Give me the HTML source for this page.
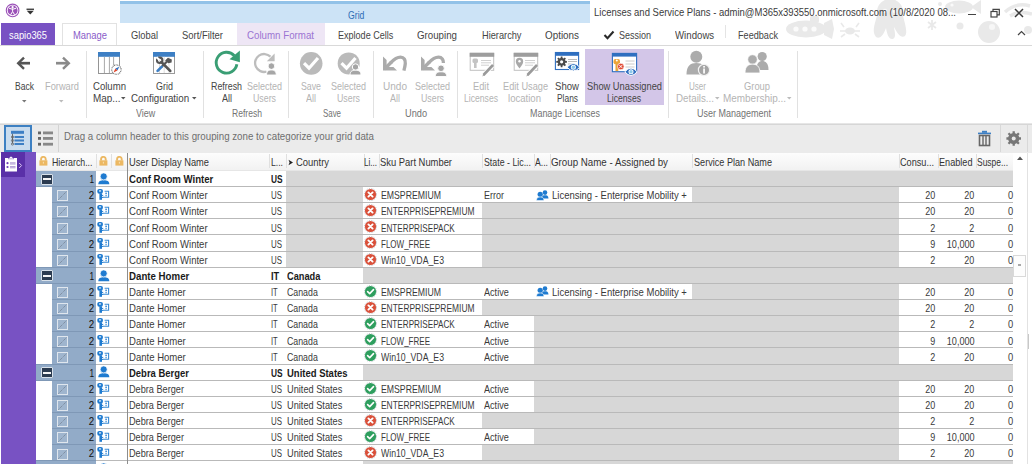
<!DOCTYPE html>
<html><head><meta charset="utf-8"><style>
html,body{margin:0;padding:0;width:1032px;height:464px;overflow:hidden;background:#fff;position:relative;font-family:"Liberation Sans", sans-serif;}
.a{position:absolute;box-sizing:border-box;}
.t{position:absolute;white-space:pre;line-height:16px;font-family:"Liberation Sans", sans-serif;}
</style></head><body>
<div class="a" style="left:120px;top:1px;width:470px;height:21.5px;background:#cce3f6;"></div><div class="a" style="left:120px;top:1px;width:470px;height:3px;background:#92c2e8;"></div><div class="a" style="left:1px;top:23px;width:54px;height:22px;background:#7852c3;"></div><div class="a" style="left:62px;top:22.5px;width:55px;height:23.5px;background:#ffffff;border:1px solid #e2e2e2;border-bottom:none;"></div><div class="a" style="left:236.5px;top:22.5px;width:88px;height:22.5px;background:#eee6f5;"></div><svg class="a" style="left:603px;top:30px;" width="12" height="10" viewBox="0 0 12 10"><path d="M1.5 5 L4.5 8.2 L10.5 1.5" fill="none" stroke="#2a2a2a" stroke-width="2.1"/></svg><div class="a" style="left:725.3px;top:25px;width:1px;height:13px;background:#e4e4e4;"></div><div class="a" style="left:0px;top:45px;width:1032px;height:1px;background:#d9d9d9;"></div><div class="a" style="left:55px;top:45px;width:7px;height:1px;background:#d9d9d9;"></div><div class="a" style="left:0px;top:46px;width:1032px;height:77px;background:#ffffff;"></div><div class="a" style="left:0px;top:123px;width:1032px;height:1px;background:#e6e6e6;"></div><div class="a" style="left:85.5px;top:51px;width:1px;height:67px;background:#e1e1e1;"></div><div class="a" style="left:203.4px;top:51px;width:1px;height:67px;background:#e1e1e1;"></div><div class="a" style="left:288.3px;top:51px;width:1px;height:67px;background:#e1e1e1;"></div><div class="a" style="left:372.6px;top:51px;width:1px;height:67px;background:#e1e1e1;"></div><div class="a" style="left:456.5px;top:51px;width:1px;height:67px;background:#e1e1e1;"></div><div class="a" style="left:668px;top:51px;width:1px;height:67px;background:#e1e1e1;"></div><div class="a" style="left:797px;top:51px;width:1px;height:67px;background:#e1e1e1;"></div><div class="a" style="left:585.3px;top:49.3px;width:79px;height:55.8px;background:#d3c6e8;"></div><div class="a" style="left:0px;top:124px;width:1032px;height:28.5px;background:#ebebeb;"></div><div class="a" style="left:0px;top:124px;width:1032px;height:1px;background:#d6d6d6;"></div><div class="a" style="left:4.3px;top:125px;width:27.4px;height:26.5px;background:#c9dcee;border:2px solid #3d80c2;"></div><div class="a" style="left:58px;top:125px;width:1px;height:27px;background:#d3d3d3;"></div><div class="a" style="left:1000px;top:125px;width:1px;height:27px;background:#d8d8d8;"></div><div class="a" style="left:1027px;top:125px;width:1px;height:27px;background:#d8d8d8;"></div><div class="a" style="left:1px;top:152px;width:35px;height:312px;background:#7852c3;"></div><div class="a" style="left:1px;top:152px;width:24px;height:25px;background:#5a30a8;"></div><div class="a" style="left:36px;top:152.5px;width:977px;height:18px;background:linear-gradient(#fdfdfd,#f1f1f1);"></div><div class="a" style="left:36px;top:170px;width:977px;height:0.6px;background:#e6e6e6;"></div><div class="a" style="left:95.6px;top:154px;width:1px;height:14px;background:#e0e0e0;"></div><div class="a" style="left:111px;top:154px;width:1px;height:14px;background:#e0e0e0;"></div><div class="a" style="left:269.4px;top:154px;width:1px;height:14px;background:#e0e0e0;"></div><div class="a" style="left:285.5px;top:154px;width:1px;height:14px;background:#e0e0e0;"></div><div class="a" style="left:363.6px;top:154px;width:1px;height:14px;background:#e0e0e0;"></div><div class="a" style="left:379.3px;top:154px;width:1px;height:14px;background:#e0e0e0;"></div><div class="a" style="left:482.3px;top:154px;width:1px;height:14px;background:#e0e0e0;"></div><div class="a" style="left:534.4px;top:154px;width:1px;height:14px;background:#e0e0e0;"></div><div class="a" style="left:550.3px;top:154px;width:1px;height:14px;background:#e0e0e0;"></div><div class="a" style="left:691.9px;top:154px;width:1px;height:14px;background:#e0e0e0;"></div><div class="a" style="left:898.5px;top:154px;width:1px;height:14px;background:#e0e0e0;"></div><div class="a" style="left:937.5px;top:154px;width:1px;height:14px;background:#e0e0e0;"></div><div class="a" style="left:975.6px;top:154px;width:1px;height:14px;background:#e0e0e0;"></div><div class="a" style="left:36px;top:170.9px;width:977px;height:16.14px;background:#ffffff;"></div><div class="a" style="left:36px;top:170.9px;width:60px;height:16.14px;background:#92abc8;"></div><div class="a" style="left:286px;top:170.9px;width:727px;height:16.14px;background:#d7d7d7;"></div><div class="a" style="left:96px;top:186.04000000000002px;width:917px;height:1px;background:#b9b9b9;"></div><div class="a" style="left:36px;top:186.04000000000002px;width:60px;height:1px;background:#7f98b6;"></div><div class="a" style="left:36px;top:187.04000000000002px;width:977px;height:16.14px;background:#ffffff;"></div><div class="a" style="left:52px;top:187.04000000000002px;width:44px;height:16.14px;background:#92abc8;"></div><div class="a" style="left:286px;top:187.04000000000002px;width:77px;height:16.14px;background:#d7d7d7;"></div><div class="a" style="left:691.9px;top:187.04000000000002px;width:207.1px;height:16.14px;background:#d7d7d7;"></div><div class="a" style="left:96px;top:202.18px;width:917px;height:1px;background:#b9b9b9;"></div><div class="a" style="left:52px;top:202.18px;width:44px;height:1px;background:#7f98b6;"></div><div class="a" style="left:36px;top:203.18px;width:977px;height:16.14px;background:#ffffff;"></div><div class="a" style="left:52px;top:203.18px;width:44px;height:16.14px;background:#92abc8;"></div><div class="a" style="left:286px;top:203.18px;width:77px;height:16.14px;background:#d7d7d7;"></div><div class="a" style="left:482.3px;top:203.18px;width:416.7px;height:16.14px;background:#d7d7d7;"></div><div class="a" style="left:96px;top:218.32px;width:917px;height:1px;background:#b9b9b9;"></div><div class="a" style="left:52px;top:218.32px;width:44px;height:1px;background:#7f98b6;"></div><div class="a" style="left:36px;top:219.32px;width:977px;height:16.14px;background:#ffffff;"></div><div class="a" style="left:52px;top:219.32px;width:44px;height:16.14px;background:#92abc8;"></div><div class="a" style="left:286px;top:219.32px;width:77px;height:16.14px;background:#d7d7d7;"></div><div class="a" style="left:482.3px;top:219.32px;width:416.7px;height:16.14px;background:#d7d7d7;"></div><div class="a" style="left:96px;top:234.45999999999998px;width:917px;height:1px;background:#b9b9b9;"></div><div class="a" style="left:52px;top:234.45999999999998px;width:44px;height:1px;background:#7f98b6;"></div><div class="a" style="left:36px;top:235.46px;width:977px;height:16.14px;background:#ffffff;"></div><div class="a" style="left:52px;top:235.46px;width:44px;height:16.14px;background:#92abc8;"></div><div class="a" style="left:286px;top:235.46px;width:77px;height:16.14px;background:#d7d7d7;"></div><div class="a" style="left:482.3px;top:235.46px;width:416.7px;height:16.14px;background:#d7d7d7;"></div><div class="a" style="left:96px;top:250.60000000000002px;width:917px;height:1px;background:#b9b9b9;"></div><div class="a" style="left:52px;top:250.60000000000002px;width:44px;height:1px;background:#7f98b6;"></div><div class="a" style="left:36px;top:251.60000000000002px;width:977px;height:16.14px;background:#ffffff;"></div><div class="a" style="left:52px;top:251.60000000000002px;width:44px;height:16.14px;background:#92abc8;"></div><div class="a" style="left:286px;top:251.60000000000002px;width:77px;height:16.14px;background:#d7d7d7;"></div><div class="a" style="left:482.3px;top:251.60000000000002px;width:416.7px;height:16.14px;background:#d7d7d7;"></div><div class="a" style="left:96px;top:266.74px;width:917px;height:1px;background:#b9b9b9;"></div><div class="a" style="left:36px;top:266.74px;width:60px;height:1px;background:#7f98b6;"></div><div class="a" style="left:36px;top:267.74px;width:977px;height:16.14px;background:#ffffff;"></div><div class="a" style="left:36px;top:267.74px;width:60px;height:16.14px;background:#92abc8;"></div><div class="a" style="left:363px;top:267.74px;width:650px;height:16.14px;background:#d7d7d7;"></div><div class="a" style="left:96px;top:282.88px;width:917px;height:1px;background:#b9b9b9;"></div><div class="a" style="left:36px;top:282.88px;width:60px;height:1px;background:#7f98b6;"></div><div class="a" style="left:36px;top:283.88px;width:977px;height:16.14px;background:#ffffff;"></div><div class="a" style="left:52px;top:283.88px;width:44px;height:16.14px;background:#92abc8;"></div><div class="a" style="left:691.9px;top:283.88px;width:207.1px;height:16.14px;background:#d7d7d7;"></div><div class="a" style="left:96px;top:299.02px;width:917px;height:1px;background:#b9b9b9;"></div><div class="a" style="left:52px;top:299.02px;width:44px;height:1px;background:#7f98b6;"></div><div class="a" style="left:36px;top:300.02px;width:977px;height:16.14px;background:#ffffff;"></div><div class="a" style="left:52px;top:300.02px;width:44px;height:16.14px;background:#92abc8;"></div><div class="a" style="left:482.3px;top:300.02px;width:416.7px;height:16.14px;background:#d7d7d7;"></div><div class="a" style="left:96px;top:315.15999999999997px;width:917px;height:1px;background:#b9b9b9;"></div><div class="a" style="left:52px;top:315.15999999999997px;width:44px;height:1px;background:#7f98b6;"></div><div class="a" style="left:36px;top:316.15999999999997px;width:977px;height:16.14px;background:#ffffff;"></div><div class="a" style="left:52px;top:316.15999999999997px;width:44px;height:16.14px;background:#92abc8;"></div><div class="a" style="left:534.4px;top:316.15999999999997px;width:364.6px;height:16.14px;background:#d7d7d7;"></div><div class="a" style="left:96px;top:331.29999999999995px;width:917px;height:1px;background:#b9b9b9;"></div><div class="a" style="left:52px;top:331.29999999999995px;width:44px;height:1px;background:#7f98b6;"></div><div class="a" style="left:36px;top:332.3px;width:977px;height:16.14px;background:#ffffff;"></div><div class="a" style="left:52px;top:332.3px;width:44px;height:16.14px;background:#92abc8;"></div><div class="a" style="left:534.4px;top:332.3px;width:364.6px;height:16.14px;background:#d7d7d7;"></div><div class="a" style="left:96px;top:347.44px;width:917px;height:1px;background:#b9b9b9;"></div><div class="a" style="left:52px;top:347.44px;width:44px;height:1px;background:#7f98b6;"></div><div class="a" style="left:36px;top:348.44000000000005px;width:977px;height:16.14px;background:#ffffff;"></div><div class="a" style="left:52px;top:348.44000000000005px;width:44px;height:16.14px;background:#92abc8;"></div><div class="a" style="left:534.4px;top:348.44000000000005px;width:364.6px;height:16.14px;background:#d7d7d7;"></div><div class="a" style="left:96px;top:363.58000000000004px;width:917px;height:1px;background:#b9b9b9;"></div><div class="a" style="left:36px;top:363.58000000000004px;width:60px;height:1px;background:#7f98b6;"></div><div class="a" style="left:36px;top:364.58000000000004px;width:977px;height:16.14px;background:#ffffff;"></div><div class="a" style="left:36px;top:364.58000000000004px;width:60px;height:16.14px;background:#92abc8;"></div><div class="a" style="left:363px;top:364.58000000000004px;width:650px;height:16.14px;background:#d7d7d7;"></div><div class="a" style="left:96px;top:379.72px;width:917px;height:1px;background:#b9b9b9;"></div><div class="a" style="left:36px;top:379.72px;width:60px;height:1px;background:#7f98b6;"></div><div class="a" style="left:36px;top:380.72px;width:977px;height:16.14px;background:#ffffff;"></div><div class="a" style="left:52px;top:380.72px;width:44px;height:16.14px;background:#92abc8;"></div><div class="a" style="left:534.4px;top:380.72px;width:364.6px;height:16.14px;background:#d7d7d7;"></div><div class="a" style="left:96px;top:395.86px;width:917px;height:1px;background:#b9b9b9;"></div><div class="a" style="left:52px;top:395.86px;width:44px;height:1px;background:#7f98b6;"></div><div class="a" style="left:36px;top:396.86px;width:977px;height:16.14px;background:#ffffff;"></div><div class="a" style="left:52px;top:396.86px;width:44px;height:16.14px;background:#92abc8;"></div><div class="a" style="left:534.4px;top:396.86px;width:364.6px;height:16.14px;background:#d7d7d7;"></div><div class="a" style="left:96px;top:412.0px;width:917px;height:1px;background:#b9b9b9;"></div><div class="a" style="left:52px;top:412.0px;width:44px;height:1px;background:#7f98b6;"></div><div class="a" style="left:36px;top:413.0px;width:977px;height:16.14px;background:#ffffff;"></div><div class="a" style="left:52px;top:413.0px;width:44px;height:16.14px;background:#92abc8;"></div><div class="a" style="left:482.3px;top:413.0px;width:416.7px;height:16.14px;background:#d7d7d7;"></div><div class="a" style="left:96px;top:428.14px;width:917px;height:1px;background:#b9b9b9;"></div><div class="a" style="left:52px;top:428.14px;width:44px;height:1px;background:#7f98b6;"></div><div class="a" style="left:36px;top:429.14px;width:977px;height:16.14px;background:#ffffff;"></div><div class="a" style="left:52px;top:429.14px;width:44px;height:16.14px;background:#92abc8;"></div><div class="a" style="left:534.4px;top:429.14px;width:364.6px;height:16.14px;background:#d7d7d7;"></div><div class="a" style="left:96px;top:444.28px;width:917px;height:1px;background:#b9b9b9;"></div><div class="a" style="left:52px;top:444.28px;width:44px;height:1px;background:#7f98b6;"></div><div class="a" style="left:36px;top:445.28px;width:977px;height:16.14px;background:#ffffff;"></div><div class="a" style="left:52px;top:445.28px;width:44px;height:16.14px;background:#92abc8;"></div><div class="a" style="left:482.3px;top:445.28px;width:416.7px;height:16.14px;background:#d7d7d7;"></div><div class="a" style="left:96px;top:460.41999999999996px;width:917px;height:1px;background:#b9b9b9;"></div><div class="a" style="left:36px;top:460.41999999999996px;width:60px;height:1px;background:#7f98b6;"></div><div class="a" style="left:36px;top:461.41999999999996px;width:977px;height:16.14px;background:#ffffff;"></div><div class="a" style="left:36px;top:461.41999999999996px;width:60px;height:16.14px;background:#92abc8;"></div><div class="a" style="left:363px;top:461.41999999999996px;width:650px;height:16.14px;background:#d7d7d7;"></div><div class="a" style="left:96px;top:476.55999999999995px;width:917px;height:1px;background:#b9b9b9;"></div><div class="a" style="left:36px;top:476.55999999999995px;width:60px;height:1px;background:#7f98b6;"></div><div class="a" style="left:126.6px;top:152.5px;width:1px;height:312px;background:#8d8d8d;"></div><div class="a" style="left:41px;top:173.6px;width:11.5px;height:11px;background:#2b3b50;border:1px solid #d8e1ea;border-radius:1px;"></div><div class="a" style="left:42.9px;top:178.3px;width:8px;height:2.1px;background:#f4f4f4;"></div><svg class="a" style="left:97.5px;top:171.8px;" width="12" height="13" viewBox="0 0 12 13"><path d="M0.3 12.2 C0.4 9.2 2.5 8.3 5.8 8.3 C9.1 8.3 11.2 9.2 11.3 12.2 Z" fill="#1f7bd0"/><circle cx="5.7" cy="4.4" r="3.5" fill="#1f7bd0" stroke="#fff" stroke-width="0.7"/></svg><div class="a" style="left:57px;top:190.34000000000003px;width:11px;height:11px;background:rgba(255,255,255,0.12);border:1px solid #dfe6ee;"></div><svg class="a" style="left:58px;top:191.34000000000003px;" width="9" height="9" viewBox="0 0 9 9"><path d="M0.5 8.5 L8.5 0.5" stroke="#6d7888" stroke-width="0.9" stroke-dasharray="1 1"/></svg><svg class="a" style="left:97px;top:188.24px;" width="13" height="13" viewBox="0 0 13 13"><rect x="0.3" y="0.9" width="5.6" height="4.8" rx="1.9" fill="#1f7bd0"/><rect x="2" y="2.4" width="2.1" height="1.1" fill="#fff"/><rect x="2.4" y="5.4" width="2.6" height="6.4" fill="#1f7bd0"/><rect x="5" y="6.9" width="1.2" height="1" fill="#1f7bd0"/><rect x="5" y="8.9" width="1.2" height="1" fill="#1f7bd0"/><path d="M7.6 3.3 H11.6 V9.3 H6" fill="none" stroke="#3a8ad4" stroke-width="1.1"/><rect x="8.3" y="4.6" width="1.6" height="1.4" fill="#3a8ad4"/><rect x="8.3" y="6.7" width="1.6" height="1.6" fill="#6aa6de"/></svg><svg class="a" style="left:364.3px;top:187.94000000000003px;" width="13" height="13" viewBox="0 0 13 13"><circle cx="6.5" cy="6.5" r="6.1" fill="none" stroke="#a4abb3" stroke-width="0.7" stroke-dasharray="1.1 1.3"/><circle cx="6.5" cy="6.5" r="5.6" fill="#d9503a"/><path d="M4.4 4.4 L8.6 8.6 M8.6 4.4 L4.4 8.6" stroke="#fff" stroke-width="1.9" stroke-linecap="round"/></svg><svg class="a" style="left:535.5px;top:189.54000000000002px;" width="13" height="11" viewBox="0 0 13 11"><circle cx="9" cy="2.6" r="2.3" fill="#1f7bd0"/><path d="M5.8 8.5 C6 5.8 7.3 5.3 9 5.3 C10.8 5.3 12.3 5.8 12.5 8.5 Z" fill="#1f7bd0"/><circle cx="4.2" cy="4.3" r="2.6" fill="#1f7bd0"/><path d="M0.4 10.6 C0.6 7.5 2.2 7 4.2 7 C6.3 7 7.8 7.5 8 10.6 Z" fill="#1f7bd0" stroke="#fff" stroke-width="0.6"/></svg><div class="a" style="left:57px;top:206.48000000000002px;width:11px;height:11px;background:rgba(255,255,255,0.12);border:1px solid #dfe6ee;"></div><svg class="a" style="left:58px;top:207.48000000000002px;" width="9" height="9" viewBox="0 0 9 9"><path d="M0.5 8.5 L8.5 0.5" stroke="#6d7888" stroke-width="0.9" stroke-dasharray="1 1"/></svg><svg class="a" style="left:97px;top:204.38px;" width="13" height="13" viewBox="0 0 13 13"><rect x="0.3" y="0.9" width="5.6" height="4.8" rx="1.9" fill="#1f7bd0"/><rect x="2" y="2.4" width="2.1" height="1.1" fill="#fff"/><rect x="2.4" y="5.4" width="2.6" height="6.4" fill="#1f7bd0"/><rect x="5" y="6.9" width="1.2" height="1" fill="#1f7bd0"/><rect x="5" y="8.9" width="1.2" height="1" fill="#1f7bd0"/><path d="M7.6 3.3 H11.6 V9.3 H6" fill="none" stroke="#3a8ad4" stroke-width="1.1"/><rect x="8.3" y="4.6" width="1.6" height="1.4" fill="#3a8ad4"/><rect x="8.3" y="6.7" width="1.6" height="1.6" fill="#6aa6de"/></svg><svg class="a" style="left:364.3px;top:204.08px;" width="13" height="13" viewBox="0 0 13 13"><circle cx="6.5" cy="6.5" r="6.1" fill="none" stroke="#a4abb3" stroke-width="0.7" stroke-dasharray="1.1 1.3"/><circle cx="6.5" cy="6.5" r="5.6" fill="#d9503a"/><path d="M4.4 4.4 L8.6 8.6 M8.6 4.4 L4.4 8.6" stroke="#fff" stroke-width="1.9" stroke-linecap="round"/></svg><div class="a" style="left:57px;top:222.62px;width:11px;height:11px;background:rgba(255,255,255,0.12);border:1px solid #dfe6ee;"></div><svg class="a" style="left:58px;top:223.62px;" width="9" height="9" viewBox="0 0 9 9"><path d="M0.5 8.5 L8.5 0.5" stroke="#6d7888" stroke-width="0.9" stroke-dasharray="1 1"/></svg><svg class="a" style="left:97px;top:220.51999999999998px;" width="13" height="13" viewBox="0 0 13 13"><rect x="0.3" y="0.9" width="5.6" height="4.8" rx="1.9" fill="#1f7bd0"/><rect x="2" y="2.4" width="2.1" height="1.1" fill="#fff"/><rect x="2.4" y="5.4" width="2.6" height="6.4" fill="#1f7bd0"/><rect x="5" y="6.9" width="1.2" height="1" fill="#1f7bd0"/><rect x="5" y="8.9" width="1.2" height="1" fill="#1f7bd0"/><path d="M7.6 3.3 H11.6 V9.3 H6" fill="none" stroke="#3a8ad4" stroke-width="1.1"/><rect x="8.3" y="4.6" width="1.6" height="1.4" fill="#3a8ad4"/><rect x="8.3" y="6.7" width="1.6" height="1.6" fill="#6aa6de"/></svg><svg class="a" style="left:364.3px;top:220.22px;" width="13" height="13" viewBox="0 0 13 13"><circle cx="6.5" cy="6.5" r="6.1" fill="none" stroke="#a4abb3" stroke-width="0.7" stroke-dasharray="1.1 1.3"/><circle cx="6.5" cy="6.5" r="5.6" fill="#d9503a"/><path d="M4.4 4.4 L8.6 8.6 M8.6 4.4 L4.4 8.6" stroke="#fff" stroke-width="1.9" stroke-linecap="round"/></svg><div class="a" style="left:57px;top:238.76000000000002px;width:11px;height:11px;background:rgba(255,255,255,0.12);border:1px solid #dfe6ee;"></div><svg class="a" style="left:58px;top:239.76000000000002px;" width="9" height="9" viewBox="0 0 9 9"><path d="M0.5 8.5 L8.5 0.5" stroke="#6d7888" stroke-width="0.9" stroke-dasharray="1 1"/></svg><svg class="a" style="left:97px;top:236.66px;" width="13" height="13" viewBox="0 0 13 13"><rect x="0.3" y="0.9" width="5.6" height="4.8" rx="1.9" fill="#1f7bd0"/><rect x="2" y="2.4" width="2.1" height="1.1" fill="#fff"/><rect x="2.4" y="5.4" width="2.6" height="6.4" fill="#1f7bd0"/><rect x="5" y="6.9" width="1.2" height="1" fill="#1f7bd0"/><rect x="5" y="8.9" width="1.2" height="1" fill="#1f7bd0"/><path d="M7.6 3.3 H11.6 V9.3 H6" fill="none" stroke="#3a8ad4" stroke-width="1.1"/><rect x="8.3" y="4.6" width="1.6" height="1.4" fill="#3a8ad4"/><rect x="8.3" y="6.7" width="1.6" height="1.6" fill="#6aa6de"/></svg><svg class="a" style="left:364.3px;top:236.36px;" width="13" height="13" viewBox="0 0 13 13"><circle cx="6.5" cy="6.5" r="6.1" fill="none" stroke="#a4abb3" stroke-width="0.7" stroke-dasharray="1.1 1.3"/><circle cx="6.5" cy="6.5" r="5.6" fill="#d9503a"/><path d="M4.4 4.4 L8.6 8.6 M8.6 4.4 L4.4 8.6" stroke="#fff" stroke-width="1.9" stroke-linecap="round"/></svg><div class="a" style="left:57px;top:254.90000000000003px;width:11px;height:11px;background:rgba(255,255,255,0.12);border:1px solid #dfe6ee;"></div><svg class="a" style="left:58px;top:255.90000000000003px;" width="9" height="9" viewBox="0 0 9 9"><path d="M0.5 8.5 L8.5 0.5" stroke="#6d7888" stroke-width="0.9" stroke-dasharray="1 1"/></svg><svg class="a" style="left:97px;top:252.8px;" width="13" height="13" viewBox="0 0 13 13"><rect x="0.3" y="0.9" width="5.6" height="4.8" rx="1.9" fill="#1f7bd0"/><rect x="2" y="2.4" width="2.1" height="1.1" fill="#fff"/><rect x="2.4" y="5.4" width="2.6" height="6.4" fill="#1f7bd0"/><rect x="5" y="6.9" width="1.2" height="1" fill="#1f7bd0"/><rect x="5" y="8.9" width="1.2" height="1" fill="#1f7bd0"/><path d="M7.6 3.3 H11.6 V9.3 H6" fill="none" stroke="#3a8ad4" stroke-width="1.1"/><rect x="8.3" y="4.6" width="1.6" height="1.4" fill="#3a8ad4"/><rect x="8.3" y="6.7" width="1.6" height="1.6" fill="#6aa6de"/></svg><svg class="a" style="left:364.3px;top:252.5px;" width="13" height="13" viewBox="0 0 13 13"><circle cx="6.5" cy="6.5" r="6.1" fill="none" stroke="#a4abb3" stroke-width="0.7" stroke-dasharray="1.1 1.3"/><circle cx="6.5" cy="6.5" r="5.6" fill="#d9503a"/><path d="M4.4 4.4 L8.6 8.6 M8.6 4.4 L4.4 8.6" stroke="#fff" stroke-width="1.9" stroke-linecap="round"/></svg><div class="a" style="left:41px;top:270.44px;width:11.5px;height:11px;background:#2b3b50;border:1px solid #d8e1ea;border-radius:1px;"></div><div class="a" style="left:42.9px;top:275.14px;width:8px;height:2.1px;background:#f4f4f4;"></div><svg class="a" style="left:97.5px;top:268.64px;" width="12" height="13" viewBox="0 0 12 13"><path d="M0.3 12.2 C0.4 9.2 2.5 8.3 5.8 8.3 C9.1 8.3 11.2 9.2 11.3 12.2 Z" fill="#1f7bd0"/><circle cx="5.7" cy="4.4" r="3.5" fill="#1f7bd0" stroke="#fff" stroke-width="0.7"/></svg><div class="a" style="left:57px;top:287.18px;width:11px;height:11px;background:rgba(255,255,255,0.12);border:1px solid #dfe6ee;"></div><svg class="a" style="left:58px;top:288.18px;" width="9" height="9" viewBox="0 0 9 9"><path d="M0.5 8.5 L8.5 0.5" stroke="#6d7888" stroke-width="0.9" stroke-dasharray="1 1"/></svg><svg class="a" style="left:97px;top:285.08px;" width="13" height="13" viewBox="0 0 13 13"><rect x="0.3" y="0.9" width="5.6" height="4.8" rx="1.9" fill="#1f7bd0"/><rect x="2" y="2.4" width="2.1" height="1.1" fill="#fff"/><rect x="2.4" y="5.4" width="2.6" height="6.4" fill="#1f7bd0"/><rect x="5" y="6.9" width="1.2" height="1" fill="#1f7bd0"/><rect x="5" y="8.9" width="1.2" height="1" fill="#1f7bd0"/><path d="M7.6 3.3 H11.6 V9.3 H6" fill="none" stroke="#3a8ad4" stroke-width="1.1"/><rect x="8.3" y="4.6" width="1.6" height="1.4" fill="#3a8ad4"/><rect x="8.3" y="6.7" width="1.6" height="1.6" fill="#6aa6de"/></svg><svg class="a" style="left:364.3px;top:284.78px;" width="13" height="13" viewBox="0 0 13 13"><circle cx="6.5" cy="6.5" r="6.1" fill="none" stroke="#a4abb3" stroke-width="0.7" stroke-dasharray="1.1 1.3"/><circle cx="6.5" cy="6.5" r="5.6" fill="#2e9e5e"/><path d="M3.6 6.6 L5.7 8.6 L9.5 4.6" fill="none" stroke="#fff" stroke-width="1.6" stroke-linecap="round" stroke-linejoin="round"/></svg><svg class="a" style="left:535.5px;top:286.38px;" width="13" height="11" viewBox="0 0 13 11"><circle cx="9" cy="2.6" r="2.3" fill="#1f7bd0"/><path d="M5.8 8.5 C6 5.8 7.3 5.3 9 5.3 C10.8 5.3 12.3 5.8 12.5 8.5 Z" fill="#1f7bd0"/><circle cx="4.2" cy="4.3" r="2.6" fill="#1f7bd0"/><path d="M0.4 10.6 C0.6 7.5 2.2 7 4.2 7 C6.3 7 7.8 7.5 8 10.6 Z" fill="#1f7bd0" stroke="#fff" stroke-width="0.6"/></svg><div class="a" style="left:57px;top:303.32px;width:11px;height:11px;background:rgba(255,255,255,0.12);border:1px solid #dfe6ee;"></div><svg class="a" style="left:58px;top:304.32px;" width="9" height="9" viewBox="0 0 9 9"><path d="M0.5 8.5 L8.5 0.5" stroke="#6d7888" stroke-width="0.9" stroke-dasharray="1 1"/></svg><svg class="a" style="left:97px;top:301.21999999999997px;" width="13" height="13" viewBox="0 0 13 13"><rect x="0.3" y="0.9" width="5.6" height="4.8" rx="1.9" fill="#1f7bd0"/><rect x="2" y="2.4" width="2.1" height="1.1" fill="#fff"/><rect x="2.4" y="5.4" width="2.6" height="6.4" fill="#1f7bd0"/><rect x="5" y="6.9" width="1.2" height="1" fill="#1f7bd0"/><rect x="5" y="8.9" width="1.2" height="1" fill="#1f7bd0"/><path d="M7.6 3.3 H11.6 V9.3 H6" fill="none" stroke="#3a8ad4" stroke-width="1.1"/><rect x="8.3" y="4.6" width="1.6" height="1.4" fill="#3a8ad4"/><rect x="8.3" y="6.7" width="1.6" height="1.6" fill="#6aa6de"/></svg><svg class="a" style="left:364.3px;top:300.91999999999996px;" width="13" height="13" viewBox="0 0 13 13"><circle cx="6.5" cy="6.5" r="6.1" fill="none" stroke="#a4abb3" stroke-width="0.7" stroke-dasharray="1.1 1.3"/><circle cx="6.5" cy="6.5" r="5.6" fill="#d9503a"/><path d="M4.4 4.4 L8.6 8.6 M8.6 4.4 L4.4 8.6" stroke="#fff" stroke-width="1.9" stroke-linecap="round"/></svg><div class="a" style="left:57px;top:319.46px;width:11px;height:11px;background:rgba(255,255,255,0.12);border:1px solid #dfe6ee;"></div><svg class="a" style="left:58px;top:320.46px;" width="9" height="9" viewBox="0 0 9 9"><path d="M0.5 8.5 L8.5 0.5" stroke="#6d7888" stroke-width="0.9" stroke-dasharray="1 1"/></svg><svg class="a" style="left:97px;top:317.35999999999996px;" width="13" height="13" viewBox="0 0 13 13"><rect x="0.3" y="0.9" width="5.6" height="4.8" rx="1.9" fill="#1f7bd0"/><rect x="2" y="2.4" width="2.1" height="1.1" fill="#fff"/><rect x="2.4" y="5.4" width="2.6" height="6.4" fill="#1f7bd0"/><rect x="5" y="6.9" width="1.2" height="1" fill="#1f7bd0"/><rect x="5" y="8.9" width="1.2" height="1" fill="#1f7bd0"/><path d="M7.6 3.3 H11.6 V9.3 H6" fill="none" stroke="#3a8ad4" stroke-width="1.1"/><rect x="8.3" y="4.6" width="1.6" height="1.4" fill="#3a8ad4"/><rect x="8.3" y="6.7" width="1.6" height="1.6" fill="#6aa6de"/></svg><svg class="a" style="left:364.3px;top:317.05999999999995px;" width="13" height="13" viewBox="0 0 13 13"><circle cx="6.5" cy="6.5" r="6.1" fill="none" stroke="#a4abb3" stroke-width="0.7" stroke-dasharray="1.1 1.3"/><circle cx="6.5" cy="6.5" r="5.6" fill="#2e9e5e"/><path d="M3.6 6.6 L5.7 8.6 L9.5 4.6" fill="none" stroke="#fff" stroke-width="1.6" stroke-linecap="round" stroke-linejoin="round"/></svg><div class="a" style="left:57px;top:335.6px;width:11px;height:11px;background:rgba(255,255,255,0.12);border:1px solid #dfe6ee;"></div><svg class="a" style="left:58px;top:336.6px;" width="9" height="9" viewBox="0 0 9 9"><path d="M0.5 8.5 L8.5 0.5" stroke="#6d7888" stroke-width="0.9" stroke-dasharray="1 1"/></svg><svg class="a" style="left:97px;top:333.5px;" width="13" height="13" viewBox="0 0 13 13"><rect x="0.3" y="0.9" width="5.6" height="4.8" rx="1.9" fill="#1f7bd0"/><rect x="2" y="2.4" width="2.1" height="1.1" fill="#fff"/><rect x="2.4" y="5.4" width="2.6" height="6.4" fill="#1f7bd0"/><rect x="5" y="6.9" width="1.2" height="1" fill="#1f7bd0"/><rect x="5" y="8.9" width="1.2" height="1" fill="#1f7bd0"/><path d="M7.6 3.3 H11.6 V9.3 H6" fill="none" stroke="#3a8ad4" stroke-width="1.1"/><rect x="8.3" y="4.6" width="1.6" height="1.4" fill="#3a8ad4"/><rect x="8.3" y="6.7" width="1.6" height="1.6" fill="#6aa6de"/></svg><svg class="a" style="left:364.3px;top:333.2px;" width="13" height="13" viewBox="0 0 13 13"><circle cx="6.5" cy="6.5" r="6.1" fill="none" stroke="#a4abb3" stroke-width="0.7" stroke-dasharray="1.1 1.3"/><circle cx="6.5" cy="6.5" r="5.6" fill="#2e9e5e"/><path d="M3.6 6.6 L5.7 8.6 L9.5 4.6" fill="none" stroke="#fff" stroke-width="1.6" stroke-linecap="round" stroke-linejoin="round"/></svg><div class="a" style="left:57px;top:351.74000000000007px;width:11px;height:11px;background:rgba(255,255,255,0.12);border:1px solid #dfe6ee;"></div><svg class="a" style="left:58px;top:352.74000000000007px;" width="9" height="9" viewBox="0 0 9 9"><path d="M0.5 8.5 L8.5 0.5" stroke="#6d7888" stroke-width="0.9" stroke-dasharray="1 1"/></svg><svg class="a" style="left:97px;top:349.64000000000004px;" width="13" height="13" viewBox="0 0 13 13"><rect x="0.3" y="0.9" width="5.6" height="4.8" rx="1.9" fill="#1f7bd0"/><rect x="2" y="2.4" width="2.1" height="1.1" fill="#fff"/><rect x="2.4" y="5.4" width="2.6" height="6.4" fill="#1f7bd0"/><rect x="5" y="6.9" width="1.2" height="1" fill="#1f7bd0"/><rect x="5" y="8.9" width="1.2" height="1" fill="#1f7bd0"/><path d="M7.6 3.3 H11.6 V9.3 H6" fill="none" stroke="#3a8ad4" stroke-width="1.1"/><rect x="8.3" y="4.6" width="1.6" height="1.4" fill="#3a8ad4"/><rect x="8.3" y="6.7" width="1.6" height="1.6" fill="#6aa6de"/></svg><svg class="a" style="left:364.3px;top:349.34000000000003px;" width="13" height="13" viewBox="0 0 13 13"><circle cx="6.5" cy="6.5" r="6.1" fill="none" stroke="#a4abb3" stroke-width="0.7" stroke-dasharray="1.1 1.3"/><circle cx="6.5" cy="6.5" r="5.6" fill="#2e9e5e"/><path d="M3.6 6.6 L5.7 8.6 L9.5 4.6" fill="none" stroke="#fff" stroke-width="1.6" stroke-linecap="round" stroke-linejoin="round"/></svg><div class="a" style="left:41px;top:367.28000000000003px;width:11.5px;height:11px;background:#2b3b50;border:1px solid #d8e1ea;border-radius:1px;"></div><div class="a" style="left:42.9px;top:371.98px;width:8px;height:2.1px;background:#f4f4f4;"></div><svg class="a" style="left:97.5px;top:365.48px;" width="12" height="13" viewBox="0 0 12 13"><path d="M0.3 12.2 C0.4 9.2 2.5 8.3 5.8 8.3 C9.1 8.3 11.2 9.2 11.3 12.2 Z" fill="#1f7bd0"/><circle cx="5.7" cy="4.4" r="3.5" fill="#1f7bd0" stroke="#fff" stroke-width="0.7"/></svg><div class="a" style="left:57px;top:384.02000000000004px;width:11px;height:11px;background:rgba(255,255,255,0.12);border:1px solid #dfe6ee;"></div><svg class="a" style="left:58px;top:385.02000000000004px;" width="9" height="9" viewBox="0 0 9 9"><path d="M0.5 8.5 L8.5 0.5" stroke="#6d7888" stroke-width="0.9" stroke-dasharray="1 1"/></svg><svg class="a" style="left:97px;top:381.92px;" width="13" height="13" viewBox="0 0 13 13"><rect x="0.3" y="0.9" width="5.6" height="4.8" rx="1.9" fill="#1f7bd0"/><rect x="2" y="2.4" width="2.1" height="1.1" fill="#fff"/><rect x="2.4" y="5.4" width="2.6" height="6.4" fill="#1f7bd0"/><rect x="5" y="6.9" width="1.2" height="1" fill="#1f7bd0"/><rect x="5" y="8.9" width="1.2" height="1" fill="#1f7bd0"/><path d="M7.6 3.3 H11.6 V9.3 H6" fill="none" stroke="#3a8ad4" stroke-width="1.1"/><rect x="8.3" y="4.6" width="1.6" height="1.4" fill="#3a8ad4"/><rect x="8.3" y="6.7" width="1.6" height="1.6" fill="#6aa6de"/></svg><svg class="a" style="left:364.3px;top:381.62px;" width="13" height="13" viewBox="0 0 13 13"><circle cx="6.5" cy="6.5" r="6.1" fill="none" stroke="#a4abb3" stroke-width="0.7" stroke-dasharray="1.1 1.3"/><circle cx="6.5" cy="6.5" r="5.6" fill="#2e9e5e"/><path d="M3.6 6.6 L5.7 8.6 L9.5 4.6" fill="none" stroke="#fff" stroke-width="1.6" stroke-linecap="round" stroke-linejoin="round"/></svg><div class="a" style="left:57px;top:400.16px;width:11px;height:11px;background:rgba(255,255,255,0.12);border:1px solid #dfe6ee;"></div><svg class="a" style="left:58px;top:401.16px;" width="9" height="9" viewBox="0 0 9 9"><path d="M0.5 8.5 L8.5 0.5" stroke="#6d7888" stroke-width="0.9" stroke-dasharray="1 1"/></svg><svg class="a" style="left:97px;top:398.06px;" width="13" height="13" viewBox="0 0 13 13"><rect x="0.3" y="0.9" width="5.6" height="4.8" rx="1.9" fill="#1f7bd0"/><rect x="2" y="2.4" width="2.1" height="1.1" fill="#fff"/><rect x="2.4" y="5.4" width="2.6" height="6.4" fill="#1f7bd0"/><rect x="5" y="6.9" width="1.2" height="1" fill="#1f7bd0"/><rect x="5" y="8.9" width="1.2" height="1" fill="#1f7bd0"/><path d="M7.6 3.3 H11.6 V9.3 H6" fill="none" stroke="#3a8ad4" stroke-width="1.1"/><rect x="8.3" y="4.6" width="1.6" height="1.4" fill="#3a8ad4"/><rect x="8.3" y="6.7" width="1.6" height="1.6" fill="#6aa6de"/></svg><svg class="a" style="left:364.3px;top:397.76px;" width="13" height="13" viewBox="0 0 13 13"><circle cx="6.5" cy="6.5" r="6.1" fill="none" stroke="#a4abb3" stroke-width="0.7" stroke-dasharray="1.1 1.3"/><circle cx="6.5" cy="6.5" r="5.6" fill="#2e9e5e"/><path d="M3.6 6.6 L5.7 8.6 L9.5 4.6" fill="none" stroke="#fff" stroke-width="1.6" stroke-linecap="round" stroke-linejoin="round"/></svg><div class="a" style="left:57px;top:416.3px;width:11px;height:11px;background:rgba(255,255,255,0.12);border:1px solid #dfe6ee;"></div><svg class="a" style="left:58px;top:417.3px;" width="9" height="9" viewBox="0 0 9 9"><path d="M0.5 8.5 L8.5 0.5" stroke="#6d7888" stroke-width="0.9" stroke-dasharray="1 1"/></svg><svg class="a" style="left:97px;top:414.2px;" width="13" height="13" viewBox="0 0 13 13"><rect x="0.3" y="0.9" width="5.6" height="4.8" rx="1.9" fill="#1f7bd0"/><rect x="2" y="2.4" width="2.1" height="1.1" fill="#fff"/><rect x="2.4" y="5.4" width="2.6" height="6.4" fill="#1f7bd0"/><rect x="5" y="6.9" width="1.2" height="1" fill="#1f7bd0"/><rect x="5" y="8.9" width="1.2" height="1" fill="#1f7bd0"/><path d="M7.6 3.3 H11.6 V9.3 H6" fill="none" stroke="#3a8ad4" stroke-width="1.1"/><rect x="8.3" y="4.6" width="1.6" height="1.4" fill="#3a8ad4"/><rect x="8.3" y="6.7" width="1.6" height="1.6" fill="#6aa6de"/></svg><svg class="a" style="left:364.3px;top:413.9px;" width="13" height="13" viewBox="0 0 13 13"><circle cx="6.5" cy="6.5" r="6.1" fill="none" stroke="#a4abb3" stroke-width="0.7" stroke-dasharray="1.1 1.3"/><circle cx="6.5" cy="6.5" r="5.6" fill="#d9503a"/><path d="M4.4 4.4 L8.6 8.6 M8.6 4.4 L4.4 8.6" stroke="#fff" stroke-width="1.9" stroke-linecap="round"/></svg><div class="a" style="left:57px;top:432.44px;width:11px;height:11px;background:rgba(255,255,255,0.12);border:1px solid #dfe6ee;"></div><svg class="a" style="left:58px;top:433.44px;" width="9" height="9" viewBox="0 0 9 9"><path d="M0.5 8.5 L8.5 0.5" stroke="#6d7888" stroke-width="0.9" stroke-dasharray="1 1"/></svg><svg class="a" style="left:97px;top:430.34px;" width="13" height="13" viewBox="0 0 13 13"><rect x="0.3" y="0.9" width="5.6" height="4.8" rx="1.9" fill="#1f7bd0"/><rect x="2" y="2.4" width="2.1" height="1.1" fill="#fff"/><rect x="2.4" y="5.4" width="2.6" height="6.4" fill="#1f7bd0"/><rect x="5" y="6.9" width="1.2" height="1" fill="#1f7bd0"/><rect x="5" y="8.9" width="1.2" height="1" fill="#1f7bd0"/><path d="M7.6 3.3 H11.6 V9.3 H6" fill="none" stroke="#3a8ad4" stroke-width="1.1"/><rect x="8.3" y="4.6" width="1.6" height="1.4" fill="#3a8ad4"/><rect x="8.3" y="6.7" width="1.6" height="1.6" fill="#6aa6de"/></svg><svg class="a" style="left:364.3px;top:430.03999999999996px;" width="13" height="13" viewBox="0 0 13 13"><circle cx="6.5" cy="6.5" r="6.1" fill="none" stroke="#a4abb3" stroke-width="0.7" stroke-dasharray="1.1 1.3"/><circle cx="6.5" cy="6.5" r="5.6" fill="#2e9e5e"/><path d="M3.6 6.6 L5.7 8.6 L9.5 4.6" fill="none" stroke="#fff" stroke-width="1.6" stroke-linecap="round" stroke-linejoin="round"/></svg><div class="a" style="left:57px;top:448.58px;width:11px;height:11px;background:rgba(255,255,255,0.12);border:1px solid #dfe6ee;"></div><svg class="a" style="left:58px;top:449.58px;" width="9" height="9" viewBox="0 0 9 9"><path d="M0.5 8.5 L8.5 0.5" stroke="#6d7888" stroke-width="0.9" stroke-dasharray="1 1"/></svg><svg class="a" style="left:97px;top:446.47999999999996px;" width="13" height="13" viewBox="0 0 13 13"><rect x="0.3" y="0.9" width="5.6" height="4.8" rx="1.9" fill="#1f7bd0"/><rect x="2" y="2.4" width="2.1" height="1.1" fill="#fff"/><rect x="2.4" y="5.4" width="2.6" height="6.4" fill="#1f7bd0"/><rect x="5" y="6.9" width="1.2" height="1" fill="#1f7bd0"/><rect x="5" y="8.9" width="1.2" height="1" fill="#1f7bd0"/><path d="M7.6 3.3 H11.6 V9.3 H6" fill="none" stroke="#3a8ad4" stroke-width="1.1"/><rect x="8.3" y="4.6" width="1.6" height="1.4" fill="#3a8ad4"/><rect x="8.3" y="6.7" width="1.6" height="1.6" fill="#6aa6de"/></svg><svg class="a" style="left:364.3px;top:446.17999999999995px;" width="13" height="13" viewBox="0 0 13 13"><circle cx="6.5" cy="6.5" r="6.1" fill="none" stroke="#a4abb3" stroke-width="0.7" stroke-dasharray="1.1 1.3"/><circle cx="6.5" cy="6.5" r="5.6" fill="#d9503a"/><path d="M4.4 4.4 L8.6 8.6 M8.6 4.4 L4.4 8.6" stroke="#fff" stroke-width="1.9" stroke-linecap="round"/></svg><div class="a" style="left:41px;top:464.11999999999995px;width:11.5px;height:11px;background:#2b3b50;border:1px solid #d8e1ea;border-radius:1px;"></div><div class="a" style="left:42.9px;top:468.81999999999994px;width:8px;height:2.1px;background:#f4f4f4;"></div><svg class="a" style="left:97.5px;top:462.31999999999994px;" width="12" height="13" viewBox="0 0 12 13"><path d="M0.3 12.2 C0.4 9.2 2.5 8.3 5.8 8.3 C9.1 8.3 11.2 9.2 11.3 12.2 Z" fill="#1f7bd0"/><circle cx="5.7" cy="4.4" r="3.5" fill="#1f7bd0" stroke="#fff" stroke-width="0.7"/></svg><div class="a" style="left:1013px;top:152.5px;width:19px;height:312px;background:#ffffff;"></div><div class="a" style="left:1027px;top:152.5px;width:1px;height:312px;background:#e2e2e2;"></div><div class="a" style="left:1013px;top:254.7px;width:12.6px;height:22px;background:#fdfdfd;border:1px solid #d9d9d9;"></div><div class="a" style="left:1018px;top:264.3px;width:3px;height:2.2px;background:#a8a8a8;"></div><svg class="a" style="left:1016px;top:155px;" width="8" height="6" viewBox="0 0 8 6"><path d="M1 5 L4 1.5 L7 5 Z" fill="#555"/></svg><div class="a" style="left:1027.5px;top:334px;width:1.2px;height:15px;background:#c8c8c8;"></div><svg class="a" style="left:5px;top:3px;" width="16" height="16" viewBox="0 0 16 16"><circle cx="7.6" cy="7.4" r="6.3" fill="none" stroke="#9c52b9" stroke-width="1.1"/><circle cx="7.6" cy="7.4" r="4.9" fill="#9c52b9"/><circle cx="7.6" cy="4.2" r="1.1" fill="#fff"/><path d="M7.6 5.3 L7.6 8.5 M4 5.2 L7.6 6.3 L11.2 5.2 M7.6 8.5 L5.6 11.8 M7.6 8.5 L9.6 11.8" stroke="#fff" stroke-width="1" fill="none"/></svg><svg class="a" style="left:26px;top:8px;" width="9" height="7" viewBox="0 0 9 7"><rect x="0.5" y="0.6" width="7.5" height="1.3" fill="#333"/><path d="M0.8 2.8 L7.8 2.8 L4.3 6.4 Z" fill="#333"/></svg><svg class="a" style="left:760px;top:0px;" width="272" height="46" viewBox="0 0 272 46">
<ellipse cx="46" cy="29" rx="20" ry="8.5" fill="#e9e9e9"/><rect x="50" y="16" width="9" height="7" rx="2" fill="#e9e9e9"/><path d="M64 23 L72 19 L74 29 L72 39 L64 35 Z" fill="#e9e9e9"/>
<circle cx="36" cy="29" r="2.6" fill="#fbfbfb"/><circle cx="45" cy="29" r="2.6" fill="#fbfbfb"/><circle cx="54" cy="29" r="2.6" fill="#fbfbfb"/>
<ellipse cx="90" cy="31" rx="5" ry="3.5" fill="#e9e9e9"/><path d="M84 27 L81 23 M96 27 L99 23 M85 34 L81 37 M95 34 L99 37 M86 31 L80 31 M94 31 L100 31" stroke="#e9e9e9" stroke-width="1.6"/>
<circle cx="130" cy="12" r="13" fill="#e9e9e9"/><path d="M117 16 C114 26 112 32 116 37 C120 40 124 34 126 28 C127 34 129 40 133 39 C137 37 134 30 134 27 C137 33 141 39 145 36 C148 33 145 24 143 16 Z" fill="#e9e9e9"/>
<circle cx="125" cy="11" r="2.2" fill="#fafafa"/><circle cx="135" cy="11" r="2.2" fill="#fafafa"/>
<path d="M168 22 L176 28 M176 22 L168 28 M172 20 L172 30" stroke="#e9e9e9" stroke-width="1.8"/>
<ellipse cx="199" cy="7" rx="14" ry="6.5" fill="#e9e9e9"/><path d="M211 7 L221 0 L221 14 Z" fill="#e9e9e9"/><circle cx="192" cy="5" r="1.6" fill="#fafafa"/>
<circle cx="200" cy="26" r="3.5" fill="#e9e9e9"/><circle cx="180" cy="4" r="2" fill="#e9e9e9"/>
<circle cx="229" cy="32" r="11" fill="#e9e9e9"/><circle cx="232" cy="27" r="3" fill="#f7f7f7"/>
<path d="M245 12 Q256 2 270 6 M250 16 Q260 10 272 14" stroke="#e9e9e9" stroke-width="3.5" fill="none"/><circle cx="268" cy="30" r="4" fill="#e9e9e9"/>
</svg><div class="a" style="left:968px;top:13.5px;width:8px;height:1.3px;background:#444;"></div><svg class="a" style="left:990px;top:8px;" width="12" height="11" viewBox="0 0 12 11"><rect x="1" y="3.5" width="6" height="5.5" fill="none" stroke="#444" stroke-width="1.2"/><path d="M3 3.5 V1.3 H9.3 V6.8 H7" fill="none" stroke="#444" stroke-width="1.2"/></svg><svg class="a" style="left:1013px;top:7px;" width="12" height="11" viewBox="0 0 12 11"><path d="M2 2 L10 10 M10 2 L2 10" stroke="#3a3a3a" stroke-width="1.5"/></svg><svg class="a" style="left:1017px;top:30px;" width="9" height="6" viewBox="0 0 9 6"><path d="M1 5 L4.5 1.5 L8 5" fill="none" stroke="#444" stroke-width="1.2"/></svg><svg class="a" style="left:15px;top:55px;" width="18" height="16" viewBox="0 0 18 16"><path d="M15 8.2 H4" stroke="#555" stroke-width="2.7"/><path d="M9 2.6 L3.2 8.2 L9 13.8" fill="none" stroke="#555" stroke-width="2.4"/></svg><svg class="a" style="left:54px;top:55px;" width="18" height="16" viewBox="0 0 18 16"><path d="M2 8.2 H14" stroke="#8a8a8a" stroke-width="2.7"/><path d="M9 2.6 L14.8 8.2 L9 13.8" fill="none" stroke="#8a8a8a" stroke-width="2.4"/></svg><svg class="a" style="left:97px;top:51px;" width="28" height="28" viewBox="0 0 28 28"><rect x="1.5" y="1.5" width="21" height="21" fill="#fff" stroke="#959595" stroke-width="1"/><rect x="1" y="1" width="22" height="4.8" fill="#3d7fc4"/><path d="M7.4 5.8 V22 M12.4 5.8 V22 M16.6 5.8 V15" stroke="#a8a8a8" stroke-width="1"/><circle cx="19.4" cy="18.6" r="5.3" fill="#fff"/><circle cx="19.4" cy="18.6" r="4.7" fill="#fff" stroke="#6a6a6a" stroke-width="1.1" stroke-dasharray="0.9 0.7"/><path d="M22.3 15.7 L20.4 19.6 L18.4 17.6 Z" fill="#2f6fc0"/><path d="M16.5 21.5 L20.4 19.6 L18.4 17.6 Z" fill="#e0452a"/></svg><svg class="a" style="left:152px;top:51px;" width="26" height="26" viewBox="0 0 26 26"><rect x="1.5" y="1.5" width="21" height="21" fill="#fff" stroke="#9a9a9a" stroke-width="1"/><rect x="1" y="1" width="22" height="4.8" fill="#3d7fc4"/><path d="M7.5 5.8 V22 M12.2 5.8 V22 M17 5.8 V22" stroke="#dedede" stroke-width="1"/><path d="M15 10.5 L9.5 16" stroke="#555" stroke-width="2.2"/><path d="M9.6 15.9 L5.6 19.9" stroke="#3d7fc4" stroke-width="2.7" stroke-linecap="round"/><path d="M13.1 9.6 L15.9 6.8 L19.8 8.4 L19.6 11.6 L16.4 12.3 Z" fill="#555"/><path d="M9.3 11 L18.3 20" stroke="#555" stroke-width="2.5" stroke-linecap="round"/><circle cx="7.7" cy="9.3" r="2.7" fill="none" stroke="#555" stroke-width="2.1"/><path d="M7.4 9 L4.6 6.2" stroke="#fff" stroke-width="2"/></svg><svg class="a" style="left:210px;top:48px;" width="34" height="30" viewBox="0 0 34 30"><path d="M24.33 7.74 A10.4 10.4 0 1 0 26.87 16.33" fill="none" stroke="#3a9e74" stroke-width="2.9"/><path d="M19.5 11.2 L29.9 2.4 L29.9 14.2 Z" fill="#3a9e74"/></svg><svg class="a" style="left:250px;top:48px;" width="30" height="30" viewBox="0 0 30 30"><path d="M20.46 8.64 A9 9 0 1 0 16.43 23.69" fill="none" stroke="#bdbdbd" stroke-width="2.3"/><path d="M16.8 13.2 L24.6 5.6 L24.6 13.2 Z" fill="#bdbdbd"/><circle cx="21.4" cy="18.1" r="3.3" fill="#a6a6a6" stroke="#fff" stroke-width="0.9"/><path d="M16.5 27 C16.7 23.3 18.3 22 21.4 22 C24.5 22 26.1 23.3 26.3 27 Z" fill="#a6a6a6" stroke="#fff" stroke-width="0.9"/></svg><svg class="a" style="left:298px;top:50px;" width="28" height="28" viewBox="0 0 28 28"><circle cx="13.2" cy="13.4" r="11.3" fill="#bababa"/><path d="M6 13.2 L11 18.2 L20 8" fill="none" stroke="#fff" stroke-width="3.2"/></svg><svg class="a" style="left:336px;top:50px;" width="28" height="28" viewBox="0 0 28 28"><circle cx="12.7" cy="13.4" r="11" fill="#bababa"/><path d="M5.5 13.2 L10.5 18.2 L19.5 8" fill="none" stroke="#fff" stroke-width="3.2"/><circle cx="19.5" cy="17" r="3.2" fill="#a5a5a5" stroke="#fff" stroke-width="1"/><path d="M14 25 C14.2 21 16.3 20.3 19.5 20.3 C22.7 20.3 24.8 21 25 25 Z" fill="#a5a5a5" stroke="#fff" stroke-width="1"/></svg><svg class="a" style="left:381px;top:51px;" width="28" height="24" viewBox="0 0 28 24"><path d="M2 5.5 L5.6 9.1 L5.6 15.9 L12.4 15.9 L16 19.5 L2 19.5 Z" fill="#ababab"/><path d="M3.5 18 L10.5 11" stroke="#ababab" stroke-width="3.3"/><path d="M9.6 11.9 C13 8.3 16.3 6.2 19.5 6.2 C23 6.2 24.6 9 24.3 12.5 C24.1 15 23.6 17 22.9 19.6" fill="none" stroke="#ababab" stroke-width="3.3"/></svg><svg class="a" style="left:419px;top:51px;" width="30" height="26" viewBox="0 0 30 26"><path d="M2 5.5 L5.6 9.1 L5.6 15.9 L12.4 15.9 L16 19.5 L2 19.5 Z" fill="#ababab"/><path d="M3.5 18 L10.5 11" stroke="#ababab" stroke-width="3.3"/><path d="M9.6 11.9 C13 8.3 16.3 6.2 19.5 6.2 C23 6.2 24.6 9 24.4 12" fill="none" stroke="#ababab" stroke-width="3.3"/><circle cx="22" cy="17.3" r="3.3" fill="#a5a5a5" stroke="#fff" stroke-width="0.9"/><path d="M16.3 25.5 C16.5 21.5 18.7 20.8 22 20.8 C25.3 20.8 27.5 21.5 27.7 25.5 Z" fill="#a5a5a5" stroke="#fff" stroke-width="0.9"/></svg><svg class="a" style="left:468px;top:51px;" width="30" height="28" viewBox="0 0 30 28"><rect x="2.2" y="2.3" width="23.5" height="17" fill="#fff" stroke="#c0c0c0" stroke-width="1"/><rect x="1.7" y="1.8" width="24.5" height="4" fill="#9d9d9d"/><rect x="4.5" y="7.5" width="5.5" height="4.5" rx="1.5" fill="#c4c4c4"/><rect x="6" y="11" width="2.6" height="6" fill="#c4c4c4"/><path d="M13 9.5 H23 M13 11.8 H23 M13 14.2 H21" stroke="#d0d0d0" stroke-width="1"/><path d="M15 24.5 L24.5 14.5" stroke="#fff" stroke-width="4.5"/><path d="M15.5 24 L25 14" stroke="#9a9a9a" stroke-width="2.6"/><path d="M14.3 25.5 L15.5 22.8 L16.8 24 Z" fill="#9a9a9a"/></svg><svg class="a" style="left:512px;top:51px;" width="30" height="28" viewBox="0 0 30 28"><rect x="2.2" y="2.3" width="23.5" height="17" fill="#fff" stroke="#c0c0c0" stroke-width="1"/><rect x="1.7" y="1.8" width="24.5" height="4" fill="#9d9d9d"/><path d="M7.5 17.5 C5 14 3.8 12.5 3.8 10.5 A3.7 3.7 0 0 1 11.2 10.5 C11.2 12.5 10 14 7.5 17.5 Z" fill="#a8a8a8"/><circle cx="7.5" cy="10.3" r="1.2" fill="#fff"/><path d="M13 9.5 H23 M13 11.8 H23 M13 14.2 H21" stroke="#d0d0d0" stroke-width="1"/><path d="M15 24.5 L24.5 14.5" stroke="#fff" stroke-width="4.5"/><path d="M15.5 24 L25 14" stroke="#9a9a9a" stroke-width="2.6"/><path d="M14.3 25.5 L15.5 22.8 L16.8 24 Z" fill="#9a9a9a"/></svg><svg class="a" style="left:553px;top:50px;" width="30" height="24" viewBox="0 0 30 24"><rect x="2.4" y="2.5" width="23.2" height="17" fill="#fff" stroke="#2f6fc0" stroke-width="1.1"/><rect x="2" y="2" width="24" height="3.8" fill="#2f6fc0"/><path d="M12.38 10.85 L13.93 10.96 L13.93 12.64 L12.38 12.75 L11.95 13.81 L12.97 14.97 L11.77 16.17 L10.61 15.15 L9.55 15.58 L9.44 17.13 L7.76 17.13 L7.65 15.58 L6.59 15.15 L5.43 16.17 L4.23 14.97 L5.25 13.81 L4.82 12.75 L3.27 12.64 L3.27 10.96 L4.82 10.85 L5.25 9.79 L4.23 8.63 L5.43 7.43 L6.59 8.45 L7.65 8.02 L7.76 6.47 L9.44 6.47 L9.55 8.02 L10.61 8.45 L11.77 7.43 L12.97 8.63 L11.95 9.79 Z" fill="#4a4a4a"/><circle cx="8.6" cy="11.8" r="1.6" fill="#fff"/><path d="M15 9.5 H24 M15 11.5 H24 M15 14 H20" stroke="#bbb" stroke-width="1"/><path d="M14 17.2 Q20.4 9.8 26.8 17.2 Q20.4 24.6 14 17.2 Z" fill="#2f6fc0" stroke="#fff" stroke-width="1"/><circle cx="20.4" cy="17.2" r="2.5" fill="#fff"/><circle cx="20.4" cy="17.2" r="1.7" fill="#8cc8ea"/></svg><svg class="a" style="left:610px;top:51px;" width="30" height="27" viewBox="0 0 30 27"><rect x="2.4" y="2.4" width="24.2" height="18.3" fill="#fff" stroke="#2f6fc0" stroke-width="1.1"/><rect x="2" y="2" width="25" height="3.6" fill="#2f6fc0"/><rect x="3.5" y="8" width="6.5" height="5.2" rx="2" fill="#eca53a"/><rect x="5.5" y="12" width="2.8" height="8" fill="#eca53a"/><rect x="8" y="15" width="2" height="1.4" fill="#eca53a"/><circle cx="6.8" cy="9.6" r="1" fill="#fff"/><circle cx="10.8" cy="15.5" r="3.3" fill="#e04a35" stroke="#fff" stroke-width="0.7"/><path d="M9.4 14.1 L12.2 16.9 M12.2 14.1 L9.4 16.9" stroke="#fff" stroke-width="1"/><path d="M15.5 10 H24.5 M15.5 13 H24.5 M15.5 16 H24.5" stroke="#c4c4c4" stroke-width="0.9"/><path d="M14.8 20.8 Q21 13.4 27.2 20.8 Q21 28.2 14.8 20.8 Z" fill="#2f6fc0" stroke="#fff" stroke-width="1"/><circle cx="21" cy="20.8" r="2.5" fill="#fff"/><circle cx="21" cy="20.8" r="1.7" fill="#8cc8ea"/></svg><svg class="a" style="left:684px;top:49px;" width="30" height="28" viewBox="0 0 30 28"><circle cx="12.3" cy="7.8" r="6" fill="#acacac"/><path d="M2.5 25.5 C2.5 16.5 6.5 14 12.3 14 C18 14 22 16.5 22 25.5 Z" fill="#acacac"/><circle cx="20" cy="21" r="5.6" fill="#a5a5a5" stroke="#f3f3f3" stroke-width="1.2"/><rect x="19.2" y="19.5" width="1.7" height="5" fill="#fff"/><rect x="19.2" y="17" width="1.7" height="1.6" fill="#fff"/></svg><svg class="a" style="left:743px;top:50px;" width="30" height="26" viewBox="0 0 30 26"><circle cx="19.2" cy="6.5" r="4.6" fill="#acacac"/><path d="M13.5 20 C13.5 13 16 11 19.2 11 C22.5 11 25.5 13 25.5 20 Z" fill="#acacac"/><circle cx="9.5" cy="9.5" r="4.8" fill="#acacac" stroke="#fff" stroke-width="0.8"/><path d="M2 23 C2 16 5.5 14.2 9.5 14.2 C13.5 14.2 17 16 17 23 Z" fill="#acacac" stroke="#fff" stroke-width="0.8"/></svg><svg class="a" style="left:22px;top:100px;" width="5" height="3" viewBox="0 0 5 3"><path d="M0 0 H4.5 L2.25 2.6 Z" fill="#777"/></svg><svg class="a" style="left:59px;top:100px;" width="5" height="3" viewBox="0 0 5 3"><path d="M0 0 H4.5 L2.25 2.6 Z" fill="#bbb"/></svg><svg class="a" style="left:121.2px;top:97.2px;" width="5" height="3" viewBox="0 0 5 3"><path d="M0 0 H4.5 L2.25 2.6 Z" fill="#555"/></svg><svg class="a" style="left:192.2px;top:97.2px;" width="5" height="3" viewBox="0 0 5 3"><path d="M0 0 H4.5 L2.25 2.6 Z" fill="#555"/></svg><svg class="a" style="left:714.8px;top:97.2px;" width="5" height="3" viewBox="0 0 5 3"><path d="M0 0 H4.5 L2.25 2.6 Z" fill="#bbb"/></svg><svg class="a" style="left:787px;top:97.2px;" width="5" height="3" viewBox="0 0 5 3"><path d="M0 0 H4.5 L2.25 2.6 Z" fill="#bbb"/></svg><svg class="a" style="left:10px;top:129px;" width="18" height="18" viewBox="0 0 18 18"><rect x="1" y="1.8" width="13" height="3" fill="#3d7fc4"/><path d="M2.5 4.8 V14.5" stroke="#555" stroke-width="0.8"/><rect x="4.5" y="7" width="9.5" height="2" fill="#3d7fc4"/><rect x="4.5" y="10.5" width="9.5" height="2" fill="#3d7fc4"/><rect x="4.5" y="14" width="9.5" height="2" fill="#3d7fc4"/><circle cx="2.5" cy="8" r="1.1" fill="none" stroke="#555" stroke-width="0.7"/><circle cx="2.5" cy="11.5" r="1.1" fill="none" stroke="#555" stroke-width="0.7"/><circle cx="2.5" cy="15" r="1.1" fill="none" stroke="#555" stroke-width="0.7"/></svg><svg class="a" style="left:37px;top:130px;" width="18" height="18" viewBox="0 0 18 18"><rect x="1" y="1.5" width="3" height="2.8" fill="#666"/><rect x="6" y="1.5" width="10" height="2.8" fill="#888"/><rect x="1" y="7" width="3" height="2.8" fill="#666"/><rect x="6" y="7" width="10" height="2.8" fill="#888"/><rect x="1" y="12.8" width="3" height="2.8" fill="#666"/><rect x="6" y="12.8" width="10" height="2.8" fill="#888"/></svg><svg class="a" style="left:977px;top:130px;" width="16" height="17" viewBox="0 0 16 17"><rect x="1" y="2.6" width="13" height="1.6" fill="#3d7fc4"/><rect x="5" y="0.8" width="5" height="2" fill="#3d7fc4"/><rect x="2.5" y="5.5" width="10" height="10" fill="none" stroke="#666" stroke-width="1.6"/><path d="M6 6 V15 M9 6 V15" stroke="#666" stroke-width="1.4"/></svg><svg class="a" style="left:1005px;top:130px;" width="18" height="17" viewBox="0 0 18 17"><circle cx="8.7" cy="8.5" r="4.2" fill="none" stroke="#777" stroke-width="2.8"/><path d="M8.7 1.2 V15.8 M1.4 8.5 H16 M3.5 3.3 L13.9 13.7 M13.9 3.3 L3.5 13.7" stroke="#777" stroke-width="2.3"/><circle cx="8.7" cy="8.5" r="2" fill="#e9e9e9"/></svg><svg class="a" style="left:4px;top:155px;" width="22" height="18" viewBox="0 0 22 18"><rect x="1" y="3" width="12" height="13.5" fill="#fff"/><path d="M4 3.8 L7 1.2 L10 3.8 Z" fill="#fff" stroke="#5b2ea6" stroke-width="0.4"/><circle cx="3.5" cy="8.2" r="1.1" fill="#6a3db5"/><circle cx="3.5" cy="12" r="1.1" fill="#6a3db5"/><path d="M6 7.8 H11.5 M6 9 H11.5 M6 11.6 H11.5 M6 12.8 H11.5" stroke="#9a80c8" stroke-width="0.8"/><path d="M15.2 8 L17.6 10.5 L15.2 13" fill="none" stroke="#d8c8f0" stroke-width="1"/></svg><svg class="a" style="left:38.8px;top:156px;" width="9" height="10" viewBox="0 0 9 10"><path d="M2.1 4.6 V3 Q2.1 0.9 4.4 0.9 Q6.7 0.9 6.7 3 V4.6" fill="none" stroke="#ecb862" stroke-width="1.9"/><rect x="0.4" y="4.3" width="8" height="5.3" fill="#ecb862"/><rect x="3.9" y="5.8" width="1" height="1.8" fill="#f8dfb0"/></svg><svg class="a" style="left:98.5px;top:156px;" width="9" height="10" viewBox="0 0 9 10"><path d="M2.1 4.6 V3 Q2.1 0.9 4.4 0.9 Q6.7 0.9 6.7 3 V4.6" fill="none" stroke="#ecb862" stroke-width="1.9"/><rect x="0.4" y="4.3" width="8" height="5.3" fill="#ecb862"/><rect x="3.9" y="5.8" width="1" height="1.8" fill="#f8dfb0"/></svg><svg class="a" style="left:114.5px;top:156px;" width="9" height="10" viewBox="0 0 9 10"><path d="M2.1 4.6 V3 Q2.1 0.9 4.4 0.9 Q6.7 0.9 6.7 3 V4.6" fill="none" stroke="#ecb862" stroke-width="1.9"/><rect x="0.4" y="4.3" width="8" height="5.3" fill="#ecb862"/><rect x="3.9" y="5.8" width="1" height="1.8" fill="#f8dfb0"/></svg><svg class="a" style="left:287.5px;top:159.2px;" width="6" height="7" viewBox="0 0 6 7"><path d="M0.5 0.8 L5 3.5 L0.5 6.2 L1.6 3.5 Z" fill="#222"/></svg>
<span class="t" style="top:6.60px;font-size:11px;color:#2f6eb5;left:347.70px;transform:scaleX(0.7892);transform-origin:0 0;">Grid</span><span class="t" style="top:3.80px;font-size:11px;color:#3b3b3b;left:594.30px;transform:scaleX(0.8627);transform-origin:0 0;">Licenses and Service Plans - admin@M365x393550.onmicrosoft.com (10/8/2020 08...</span><span class="t" style="top:26.80px;font-size:11px;color:#ffffff;left:8.80px;transform:scaleX(0.8509);transform-origin:0 0;">sapio365</span><span class="t" style="top:26.80px;font-size:11px;color:#8a5cc8;left:72.80px;transform:scaleX(0.8550);transform-origin:0 0;">Manage</span><span class="t" style="top:26.80px;font-size:11px;color:#9b74d2;left:247.00px;transform:scaleX(0.8839);transform-origin:0 0;">Column Format</span><span class="t" style="top:26.80px;font-size:11px;color:#444444;left:131.00px;transform:scaleX(0.8491);transform-origin:0 0;">Global</span><span class="t" style="top:26.80px;font-size:11px;color:#444444;left:182.00px;transform:scaleX(0.8598);transform-origin:0 0;">Sort/Filter</span><span class="t" style="top:26.80px;font-size:11px;color:#444444;left:337.80px;transform:scaleX(0.8221);transform-origin:0 0;">Explode Cells</span><span class="t" style="top:26.80px;font-size:11px;color:#444444;left:417.30px;transform:scaleX(0.8837);transform-origin:0 0;">Grouping</span><span class="t" style="top:26.80px;font-size:11px;color:#444444;left:481.50px;transform:scaleX(0.8390);transform-origin:0 0;">Hierarchy</span><span class="t" style="top:26.80px;font-size:11px;color:#444444;left:545.00px;transform:scaleX(0.8966);transform-origin:0 0;">Options</span><span class="t" style="top:26.80px;font-size:11px;color:#444444;left:619.00px;transform:scaleX(0.8176);transform-origin:0 0;">Session</span><span class="t" style="top:26.80px;font-size:11px;color:#444444;left:674.80px;transform:scaleX(0.8784);transform-origin:0 0;">Windows</span><span class="t" style="top:26.80px;font-size:11px;color:#444444;left:738.00px;transform:scaleX(0.8279);transform-origin:0 0;">Feedback</span><span class="t" style="top:77.80px;font-size:11px;color:#444444;left:15.00px;transform:scaleX(0.7765);transform-origin:0 0;">Back</span><span class="t" style="top:77.80px;font-size:11px;color:#b4b4b4;left:45.00px;transform:scaleX(0.8428);transform-origin:0 0;">Forward</span><span class="t" style="top:77.80px;font-size:11px;color:#444444;left:93.00px;transform:scaleX(0.8706);transform-origin:0 0;">Column</span><span class="t" style="top:89.60px;font-size:11px;color:#444444;left:93.00px;transform:scaleX(0.9026);transform-origin:0 0;">Map...</span><span class="t" style="top:77.80px;font-size:11px;color:#444444;left:155.60px;transform:scaleX(0.8132);transform-origin:0 0;">Grid</span><span class="t" style="top:89.60px;font-size:11px;color:#444444;left:131.25px;transform:scaleX(0.8879);transform-origin:0 0;">Configuration</span><span class="t" style="top:104.60px;font-size:11px;color:#737373;left:136.25px;transform:scaleX(0.8159);transform-origin:0 0;">View</span><span class="t" style="top:77.80px;font-size:11px;color:#444444;left:211.00px;transform:scaleX(0.8045);transform-origin:0 0;">Refresh</span><span class="t" style="top:89.60px;font-size:11px;color:#444444;left:222.00px;transform:scaleX(0.8174);transform-origin:0 0;">All</span><span class="t" style="top:77.80px;font-size:11px;color:#b4b4b4;left:247.00px;transform:scaleX(0.8175);transform-origin:0 0;">Selected</span><span class="t" style="top:89.60px;font-size:11px;color:#b4b4b4;left:253.00px;transform:scaleX(0.8004);transform-origin:0 0;">Users</span><span class="t" style="top:104.60px;font-size:11px;color:#737373;left:232.00px;transform:scaleX(0.7786);transform-origin:0 0;">Refresh</span><span class="t" style="top:77.80px;font-size:11px;color:#b4b4b4;left:301.00px;transform:scaleX(0.7975);transform-origin:0 0;">Save</span><span class="t" style="top:89.60px;font-size:11px;color:#b4b4b4;left:306.00px;transform:scaleX(0.8174);transform-origin:0 0;">All</span><span class="t" style="top:77.80px;font-size:11px;color:#b4b4b4;left:331.00px;transform:scaleX(0.8175);transform-origin:0 0;">Selected</span><span class="t" style="top:89.60px;font-size:11px;color:#b4b4b4;left:337.00px;transform:scaleX(0.8004);transform-origin:0 0;">Users</span><span class="t" style="top:104.60px;font-size:11px;color:#737373;left:323.00px;transform:scaleX(0.7178);transform-origin:0 0;">Save</span><span class="t" style="top:77.80px;font-size:11px;color:#b4b4b4;left:383.00px;transform:scaleX(0.9127);transform-origin:0 0;">Undo</span><span class="t" style="top:89.60px;font-size:11px;color:#b4b4b4;left:390.00px;transform:scaleX(0.8174);transform-origin:0 0;">All</span><span class="t" style="top:77.80px;font-size:11px;color:#b4b4b4;left:415.00px;transform:scaleX(0.8175);transform-origin:0 0;">Selected</span><span class="t" style="top:89.60px;font-size:11px;color:#b4b4b4;left:421.00px;transform:scaleX(0.8004);transform-origin:0 0;">Users</span><span class="t" style="top:104.60px;font-size:11px;color:#737373;left:405.00px;transform:scaleX(0.8366);transform-origin:0 0;">Undo</span><span class="t" style="top:77.80px;font-size:11px;color:#b4b4b4;left:473.00px;transform:scaleX(0.8435);transform-origin:0 0;">Edit</span><span class="t" style="top:89.60px;font-size:11px;color:#b4b4b4;left:464.00px;transform:scaleX(0.7830);transform-origin:0 0;">Licenses</span><span class="t" style="top:77.80px;font-size:11px;color:#b4b4b4;left:503.00px;transform:scaleX(0.8362);transform-origin:0 0;">Edit Usage</span><span class="t" style="top:89.60px;font-size:11px;color:#b4b4b4;left:508.00px;transform:scaleX(0.8702);transform-origin:0 0;">location</span><span class="t" style="top:77.80px;font-size:11px;color:#444444;left:555.00px;transform:scaleX(0.8717);transform-origin:0 0;">Show</span><span class="t" style="top:89.60px;font-size:11px;color:#444444;left:557.00px;transform:scaleX(0.7628);transform-origin:0 0;">Plans</span><span class="t" style="top:104.60px;font-size:11px;color:#737373;left:529.50px;transform:scaleX(0.8117);transform-origin:0 0;">Manage Licenses</span><span class="t" style="top:77.80px;font-size:11px;color:#b4b4b4;left:689.00px;transform:scaleX(0.7317);transform-origin:0 0;">User</span><span class="t" style="top:89.60px;font-size:11px;color:#b4b4b4;left:676.00px;transform:scaleX(0.8879);transform-origin:0 0;">Details...</span><span class="t" style="top:77.80px;font-size:11px;color:#b4b4b4;left:744.00px;transform:scaleX(0.8503);transform-origin:0 0;">Group</span><span class="t" style="top:89.60px;font-size:11px;color:#b4b4b4;left:723.00px;transform:scaleX(0.9038);transform-origin:0 0;">Membership...</span><span class="t" style="top:104.60px;font-size:11px;color:#737373;left:697.00px;transform:scaleX(0.8177);transform-origin:0 0;">User Management</span><span class="t" style="top:77.80px;font-size:11px;color:#444444;left:587.00px;transform:scaleX(0.8458);transform-origin:0 0;">Show Unassigned</span><span class="t" style="top:89.60px;font-size:11px;color:#444444;left:607.00px;transform:scaleX(0.7830);transform-origin:0 0;">Licenses</span><span class="t" style="top:128.30px;font-size:11px;color:#6e6e6e;left:64.00px;transform:scaleX(0.8847);transform-origin:0 0;">Drag a column header to this grouping zone to categorize your grid data</span><span class="t" style="top:153.60px;font-size:11px;color:#333333;left:51.50px;transform:scaleX(0.7980);transform-origin:0 0;">Hierarch...</span><span class="t" style="top:153.60px;font-size:11px;color:#333333;left:129.40px;transform:scaleX(0.8443);transform-origin:0 0;">User Display Name</span><span class="t" style="top:153.60px;font-size:11px;color:#333333;left:271.00px;transform:scaleX(0.7845);transform-origin:0 0;">L...</span><span class="t" style="top:153.60px;font-size:11px;color:#333333;left:296.00px;transform:scaleX(0.8564);transform-origin:0 0;">Country</span><span class="t" style="top:153.60px;font-size:11px;color:#333333;left:364.00px;transform:scaleX(0.7330);transform-origin:0 0;">Li...</span><span class="t" style="top:153.60px;font-size:11px;color:#333333;left:380.00px;transform:scaleX(0.8533);transform-origin:0 0;">Sku Part Number</span><span class="t" style="top:153.60px;font-size:11px;color:#333333;left:484.00px;transform:scaleX(0.8006);transform-origin:0 0;">State - Lic...</span><span class="t" style="top:153.60px;font-size:11px;color:#333333;left:535.00px;transform:scaleX(0.7871);transform-origin:0 0;">A...</span><span class="t" style="top:153.60px;font-size:11px;color:#333333;left:551.00px;transform:scaleX(0.8858);transform-origin:0 0;">Group Name - Assigned by</span><span class="t" style="top:153.60px;font-size:11px;color:#333333;left:693.50px;transform:scaleX(0.8284);transform-origin:0 0;">Service Plan Name</span><span class="t" style="top:153.60px;font-size:11px;color:#333333;left:899.50px;transform:scaleX(0.8299);transform-origin:0 0;">Consu...</span><span class="t" style="top:153.60px;font-size:11px;color:#333333;left:938.50px;transform:scaleX(0.8297);transform-origin:0 0;">Enabled</span><span class="t" style="top:153.60px;font-size:11px;color:#333333;left:977.00px;transform:scaleX(0.7681);transform-origin:0 0;">Suspe...</span><span class="t" style="top:171.10px;font-size:11px;color:#111111;left:87.67px;transform:scaleX(0.7510);transform-origin:100% 0;">1</span><span class="t" style="top:171.10px;font-size:11px;color:#1a1a1a;font-weight:bold;left:129.40px;transform:scaleX(0.8740);transform-origin:0 0;">Conf Room Winter</span><span class="t" style="top:171.10px;font-size:11px;color:#1a1a1a;font-weight:bold;left:271.40px;transform:scaleX(0.7591);transform-origin:0 0;">US</span><span class="t" style="top:187.24px;font-size:11px;color:#111111;left:87.67px;transform:scaleX(0.8816);transform-origin:100% 0;">2</span><span class="t" style="top:187.24px;font-size:11px;color:#3a3a3a;left:129.40px;transform:scaleX(0.8687);transform-origin:0 0;">Conf Room Winter</span><span class="t" style="top:187.24px;font-size:11px;color:#3a3a3a;left:271.40px;transform:scaleX(0.7198);transform-origin:0 0;">US</span><span class="t" style="top:187.24px;font-size:11px;color:#3a3a3a;left:381.00px;transform:scaleX(0.7918);transform-origin:0 0;">EMSPREMIUM</span><span class="t" style="top:187.24px;font-size:11px;color:#3a3a3a;left:484.00px;transform:scaleX(0.8179);transform-origin:0 0;">Error</span><span class="t" style="top:187.24px;font-size:11px;color:#3a3a3a;left:551.60px;transform:scaleX(0.8635);transform-origin:0 0;">Licensing - Enterprise Mobility +</span><span class="t" style="top:187.24px;font-size:11px;color:#3a3a3a;left:923.25px;transform:scaleX(0.8163);transform-origin:100% 0;">20</span><span class="t" style="top:187.24px;font-size:11px;color:#3a3a3a;left:961.95px;transform:scaleX(0.8163);transform-origin:100% 0;">20</span><span class="t" style="top:187.24px;font-size:11px;color:#3a3a3a;left:1006.88px;transform:scaleX(0.8490);transform-origin:100% 0;">0</span><span class="t" style="top:203.38px;font-size:11px;color:#111111;left:87.67px;transform:scaleX(0.8816);transform-origin:100% 0;">2</span><span class="t" style="top:203.38px;font-size:11px;color:#3a3a3a;left:129.40px;transform:scaleX(0.8687);transform-origin:0 0;">Conf Room Winter</span><span class="t" style="top:203.38px;font-size:11px;color:#3a3a3a;left:271.40px;transform:scaleX(0.7198);transform-origin:0 0;">US</span><span class="t" style="top:203.38px;font-size:11px;color:#3a3a3a;left:381.00px;transform:scaleX(0.7648);transform-origin:0 0;">ENTERPRISEPREMIUM</span><span class="t" style="top:203.38px;font-size:11px;color:#3a3a3a;left:923.25px;transform:scaleX(0.8163);transform-origin:100% 0;">20</span><span class="t" style="top:203.38px;font-size:11px;color:#3a3a3a;left:961.95px;transform:scaleX(0.8163);transform-origin:100% 0;">20</span><span class="t" style="top:203.38px;font-size:11px;color:#3a3a3a;left:1006.88px;transform:scaleX(0.8490);transform-origin:100% 0;">0</span><span class="t" style="top:219.52px;font-size:11px;color:#111111;left:87.67px;transform:scaleX(0.8816);transform-origin:100% 0;">2</span><span class="t" style="top:219.52px;font-size:11px;color:#3a3a3a;left:129.40px;transform:scaleX(0.8687);transform-origin:0 0;">Conf Room Winter</span><span class="t" style="top:219.52px;font-size:11px;color:#3a3a3a;left:271.40px;transform:scaleX(0.7198);transform-origin:0 0;">US</span><span class="t" style="top:219.52px;font-size:11px;color:#3a3a3a;left:381.00px;transform:scaleX(0.7417);transform-origin:0 0;">ENTERPRISEPACK</span><span class="t" style="top:219.52px;font-size:11px;color:#3a3a3a;left:929.38px;transform:scaleX(0.8163);transform-origin:100% 0;">2</span><span class="t" style="top:219.52px;font-size:11px;color:#3a3a3a;left:968.08px;transform:scaleX(0.8163);transform-origin:100% 0;">2</span><span class="t" style="top:219.52px;font-size:11px;color:#3a3a3a;left:1006.88px;transform:scaleX(0.8490);transform-origin:100% 0;">0</span><span class="t" style="top:235.66px;font-size:11px;color:#111111;left:87.67px;transform:scaleX(0.8816);transform-origin:100% 0;">2</span><span class="t" style="top:235.66px;font-size:11px;color:#3a3a3a;left:129.40px;transform:scaleX(0.8687);transform-origin:0 0;">Conf Room Winter</span><span class="t" style="top:235.66px;font-size:11px;color:#3a3a3a;left:271.40px;transform:scaleX(0.7198);transform-origin:0 0;">US</span><span class="t" style="top:235.66px;font-size:11px;color:#3a3a3a;left:381.00px;transform:scaleX(0.7288);transform-origin:0 0;">FLOW_FREE</span><span class="t" style="top:235.66px;font-size:11px;color:#3a3a3a;left:929.38px;transform:scaleX(0.8163);transform-origin:100% 0;">9</span><span class="t" style="top:235.66px;font-size:11px;color:#3a3a3a;left:940.54px;transform:scaleX(0.8290);transform-origin:100% 0;">10,000</span><span class="t" style="top:235.66px;font-size:11px;color:#3a3a3a;left:1006.88px;transform:scaleX(0.8490);transform-origin:100% 0;">0</span><span class="t" style="top:251.80px;font-size:11px;color:#111111;left:87.67px;transform:scaleX(0.8816);transform-origin:100% 0;">2</span><span class="t" style="top:251.80px;font-size:11px;color:#3a3a3a;left:129.40px;transform:scaleX(0.8687);transform-origin:0 0;">Conf Room Winter</span><span class="t" style="top:251.80px;font-size:11px;color:#3a3a3a;left:271.40px;transform:scaleX(0.7198);transform-origin:0 0;">US</span><span class="t" style="top:251.80px;font-size:11px;color:#3a3a3a;left:381.00px;transform:scaleX(0.7925);transform-origin:0 0;">Win10_VDA_E3</span><span class="t" style="top:251.80px;font-size:11px;color:#3a3a3a;left:929.38px;transform:scaleX(0.8163);transform-origin:100% 0;">2</span><span class="t" style="top:251.80px;font-size:11px;color:#3a3a3a;left:961.95px;transform:scaleX(0.8163);transform-origin:100% 0;">20</span><span class="t" style="top:251.80px;font-size:11px;color:#3a3a3a;left:1006.88px;transform:scaleX(0.8490);transform-origin:100% 0;">0</span><span class="t" style="top:267.94px;font-size:11px;color:#111111;left:87.67px;transform:scaleX(0.7510);transform-origin:100% 0;">1</span><span class="t" style="top:267.94px;font-size:11px;color:#1a1a1a;font-weight:bold;left:129.40px;transform:scaleX(0.8807);transform-origin:0 0;">Dante Homer</span><span class="t" style="top:267.94px;font-size:11px;color:#1a1a1a;font-weight:bold;left:271.40px;transform:scaleX(0.8383);transform-origin:0 0;">IT</span><span class="t" style="top:267.94px;font-size:11px;color:#1a1a1a;font-weight:bold;left:287.40px;transform:scaleX(0.8403);transform-origin:0 0;">Canada</span><span class="t" style="top:284.08px;font-size:11px;color:#111111;left:87.67px;transform:scaleX(0.8816);transform-origin:100% 0;">2</span><span class="t" style="top:284.08px;font-size:11px;color:#3a3a3a;left:129.40px;transform:scaleX(0.8682);transform-origin:0 0;">Dante Homer</span><span class="t" style="top:284.08px;font-size:11px;color:#3a3a3a;left:271.40px;transform:scaleX(0.6850);transform-origin:0 0;">IT</span><span class="t" style="top:284.08px;font-size:11px;color:#3a3a3a;left:287.40px;transform:scaleX(0.7990);transform-origin:0 0;">Canada</span><span class="t" style="top:284.08px;font-size:11px;color:#3a3a3a;left:381.00px;transform:scaleX(0.7918);transform-origin:0 0;">EMSPREMIUM</span><span class="t" style="top:284.08px;font-size:11px;color:#3a3a3a;left:484.00px;transform:scaleX(0.8275);transform-origin:0 0;">Active</span><span class="t" style="top:284.08px;font-size:11px;color:#3a3a3a;left:551.60px;transform:scaleX(0.8635);transform-origin:0 0;">Licensing - Enterprise Mobility +</span><span class="t" style="top:284.08px;font-size:11px;color:#3a3a3a;left:923.25px;transform:scaleX(0.8163);transform-origin:100% 0;">20</span><span class="t" style="top:284.08px;font-size:11px;color:#3a3a3a;left:961.95px;transform:scaleX(0.8163);transform-origin:100% 0;">20</span><span class="t" style="top:284.08px;font-size:11px;color:#3a3a3a;left:1006.88px;transform:scaleX(0.8490);transform-origin:100% 0;">0</span><span class="t" style="top:300.22px;font-size:11px;color:#111111;left:87.67px;transform:scaleX(0.8816);transform-origin:100% 0;">2</span><span class="t" style="top:300.22px;font-size:11px;color:#3a3a3a;left:129.40px;transform:scaleX(0.8682);transform-origin:0 0;">Dante Homer</span><span class="t" style="top:300.22px;font-size:11px;color:#3a3a3a;left:271.40px;transform:scaleX(0.6850);transform-origin:0 0;">IT</span><span class="t" style="top:300.22px;font-size:11px;color:#3a3a3a;left:287.40px;transform:scaleX(0.7990);transform-origin:0 0;">Canada</span><span class="t" style="top:300.22px;font-size:11px;color:#3a3a3a;left:381.00px;transform:scaleX(0.7648);transform-origin:0 0;">ENTERPRISEPREMIUM</span><span class="t" style="top:300.22px;font-size:11px;color:#3a3a3a;left:923.25px;transform:scaleX(0.8163);transform-origin:100% 0;">20</span><span class="t" style="top:300.22px;font-size:11px;color:#3a3a3a;left:961.95px;transform:scaleX(0.8163);transform-origin:100% 0;">20</span><span class="t" style="top:300.22px;font-size:11px;color:#3a3a3a;left:1006.88px;transform:scaleX(0.8490);transform-origin:100% 0;">0</span><span class="t" style="top:316.36px;font-size:11px;color:#111111;left:87.67px;transform:scaleX(0.8816);transform-origin:100% 0;">2</span><span class="t" style="top:316.36px;font-size:11px;color:#3a3a3a;left:129.40px;transform:scaleX(0.8682);transform-origin:0 0;">Dante Homer</span><span class="t" style="top:316.36px;font-size:11px;color:#3a3a3a;left:271.40px;transform:scaleX(0.6850);transform-origin:0 0;">IT</span><span class="t" style="top:316.36px;font-size:11px;color:#3a3a3a;left:287.40px;transform:scaleX(0.7990);transform-origin:0 0;">Canada</span><span class="t" style="top:316.36px;font-size:11px;color:#3a3a3a;left:381.00px;transform:scaleX(0.7417);transform-origin:0 0;">ENTERPRISEPACK</span><span class="t" style="top:316.36px;font-size:11px;color:#3a3a3a;left:484.00px;transform:scaleX(0.8275);transform-origin:0 0;">Active</span><span class="t" style="top:316.36px;font-size:11px;color:#3a3a3a;left:929.38px;transform:scaleX(0.8163);transform-origin:100% 0;">2</span><span class="t" style="top:316.36px;font-size:11px;color:#3a3a3a;left:968.08px;transform:scaleX(0.8163);transform-origin:100% 0;">2</span><span class="t" style="top:316.36px;font-size:11px;color:#3a3a3a;left:1006.88px;transform:scaleX(0.8490);transform-origin:100% 0;">0</span><span class="t" style="top:332.50px;font-size:11px;color:#111111;left:87.67px;transform:scaleX(0.8816);transform-origin:100% 0;">2</span><span class="t" style="top:332.50px;font-size:11px;color:#3a3a3a;left:129.40px;transform:scaleX(0.8682);transform-origin:0 0;">Dante Homer</span><span class="t" style="top:332.50px;font-size:11px;color:#3a3a3a;left:271.40px;transform:scaleX(0.6850);transform-origin:0 0;">IT</span><span class="t" style="top:332.50px;font-size:11px;color:#3a3a3a;left:287.40px;transform:scaleX(0.7990);transform-origin:0 0;">Canada</span><span class="t" style="top:332.50px;font-size:11px;color:#3a3a3a;left:381.00px;transform:scaleX(0.7288);transform-origin:0 0;">FLOW_FREE</span><span class="t" style="top:332.50px;font-size:11px;color:#3a3a3a;left:484.00px;transform:scaleX(0.8275);transform-origin:0 0;">Active</span><span class="t" style="top:332.50px;font-size:11px;color:#3a3a3a;left:929.38px;transform:scaleX(0.8163);transform-origin:100% 0;">9</span><span class="t" style="top:332.50px;font-size:11px;color:#3a3a3a;left:940.54px;transform:scaleX(0.8290);transform-origin:100% 0;">10,000</span><span class="t" style="top:332.50px;font-size:11px;color:#3a3a3a;left:1006.88px;transform:scaleX(0.8490);transform-origin:100% 0;">0</span><span class="t" style="top:348.64px;font-size:11px;color:#111111;left:87.67px;transform:scaleX(0.8816);transform-origin:100% 0;">2</span><span class="t" style="top:348.64px;font-size:11px;color:#3a3a3a;left:129.40px;transform:scaleX(0.8682);transform-origin:0 0;">Dante Homer</span><span class="t" style="top:348.64px;font-size:11px;color:#3a3a3a;left:271.40px;transform:scaleX(0.6850);transform-origin:0 0;">IT</span><span class="t" style="top:348.64px;font-size:11px;color:#3a3a3a;left:287.40px;transform:scaleX(0.7990);transform-origin:0 0;">Canada</span><span class="t" style="top:348.64px;font-size:11px;color:#3a3a3a;left:381.00px;transform:scaleX(0.7925);transform-origin:0 0;">Win10_VDA_E3</span><span class="t" style="top:348.64px;font-size:11px;color:#3a3a3a;left:484.00px;transform:scaleX(0.8275);transform-origin:0 0;">Active</span><span class="t" style="top:348.64px;font-size:11px;color:#3a3a3a;left:929.38px;transform:scaleX(0.8163);transform-origin:100% 0;">2</span><span class="t" style="top:348.64px;font-size:11px;color:#3a3a3a;left:961.95px;transform:scaleX(0.8163);transform-origin:100% 0;">20</span><span class="t" style="top:348.64px;font-size:11px;color:#3a3a3a;left:1006.88px;transform:scaleX(0.8490);transform-origin:100% 0;">0</span><span class="t" style="top:364.78px;font-size:11px;color:#111111;left:87.67px;transform:scaleX(0.7510);transform-origin:100% 0;">1</span><span class="t" style="top:364.78px;font-size:11px;color:#1a1a1a;font-weight:bold;left:129.40px;transform:scaleX(0.8608);transform-origin:0 0;">Debra Berger</span><span class="t" style="top:364.78px;font-size:11px;color:#1a1a1a;font-weight:bold;left:271.40px;transform:scaleX(0.7591);transform-origin:0 0;">US</span><span class="t" style="top:364.78px;font-size:11px;color:#1a1a1a;font-weight:bold;left:287.40px;transform:scaleX(0.8621);transform-origin:0 0;">United States</span><span class="t" style="top:380.92px;font-size:11px;color:#111111;left:87.67px;transform:scaleX(0.8816);transform-origin:100% 0;">2</span><span class="t" style="top:380.92px;font-size:11px;color:#3a3a3a;left:129.40px;transform:scaleX(0.8327);transform-origin:0 0;">Debra Berger</span><span class="t" style="top:380.92px;font-size:11px;color:#3a3a3a;left:271.40px;transform:scaleX(0.7198);transform-origin:0 0;">US</span><span class="t" style="top:380.92px;font-size:11px;color:#3a3a3a;left:287.40px;transform:scaleX(0.8373);transform-origin:0 0;">United States</span><span class="t" style="top:380.92px;font-size:11px;color:#3a3a3a;left:381.00px;transform:scaleX(0.7918);transform-origin:0 0;">EMSPREMIUM</span><span class="t" style="top:380.92px;font-size:11px;color:#3a3a3a;left:484.00px;transform:scaleX(0.8275);transform-origin:0 0;">Active</span><span class="t" style="top:380.92px;font-size:11px;color:#3a3a3a;left:923.25px;transform:scaleX(0.8163);transform-origin:100% 0;">20</span><span class="t" style="top:380.92px;font-size:11px;color:#3a3a3a;left:961.95px;transform:scaleX(0.8163);transform-origin:100% 0;">20</span><span class="t" style="top:380.92px;font-size:11px;color:#3a3a3a;left:1006.88px;transform:scaleX(0.8490);transform-origin:100% 0;">0</span><span class="t" style="top:397.06px;font-size:11px;color:#111111;left:87.67px;transform:scaleX(0.8816);transform-origin:100% 0;">2</span><span class="t" style="top:397.06px;font-size:11px;color:#3a3a3a;left:129.40px;transform:scaleX(0.8327);transform-origin:0 0;">Debra Berger</span><span class="t" style="top:397.06px;font-size:11px;color:#3a3a3a;left:271.40px;transform:scaleX(0.7198);transform-origin:0 0;">US</span><span class="t" style="top:397.06px;font-size:11px;color:#3a3a3a;left:287.40px;transform:scaleX(0.8373);transform-origin:0 0;">United States</span><span class="t" style="top:397.06px;font-size:11px;color:#3a3a3a;left:381.00px;transform:scaleX(0.7648);transform-origin:0 0;">ENTERPRISEPREMIUM</span><span class="t" style="top:397.06px;font-size:11px;color:#3a3a3a;left:484.00px;transform:scaleX(0.8275);transform-origin:0 0;">Active</span><span class="t" style="top:397.06px;font-size:11px;color:#3a3a3a;left:923.25px;transform:scaleX(0.8163);transform-origin:100% 0;">20</span><span class="t" style="top:397.06px;font-size:11px;color:#3a3a3a;left:961.95px;transform:scaleX(0.8163);transform-origin:100% 0;">20</span><span class="t" style="top:397.06px;font-size:11px;color:#3a3a3a;left:1006.88px;transform:scaleX(0.8490);transform-origin:100% 0;">0</span><span class="t" style="top:413.20px;font-size:11px;color:#111111;left:87.67px;transform:scaleX(0.8816);transform-origin:100% 0;">2</span><span class="t" style="top:413.20px;font-size:11px;color:#3a3a3a;left:129.40px;transform:scaleX(0.8327);transform-origin:0 0;">Debra Berger</span><span class="t" style="top:413.20px;font-size:11px;color:#3a3a3a;left:271.40px;transform:scaleX(0.7198);transform-origin:0 0;">US</span><span class="t" style="top:413.20px;font-size:11px;color:#3a3a3a;left:287.40px;transform:scaleX(0.8373);transform-origin:0 0;">United States</span><span class="t" style="top:413.20px;font-size:11px;color:#3a3a3a;left:381.00px;transform:scaleX(0.7417);transform-origin:0 0;">ENTERPRISEPACK</span><span class="t" style="top:413.20px;font-size:11px;color:#3a3a3a;left:929.38px;transform:scaleX(0.8163);transform-origin:100% 0;">2</span><span class="t" style="top:413.20px;font-size:11px;color:#3a3a3a;left:968.08px;transform:scaleX(0.8163);transform-origin:100% 0;">2</span><span class="t" style="top:413.20px;font-size:11px;color:#3a3a3a;left:1006.88px;transform:scaleX(0.8490);transform-origin:100% 0;">0</span><span class="t" style="top:429.34px;font-size:11px;color:#111111;left:87.67px;transform:scaleX(0.8816);transform-origin:100% 0;">2</span><span class="t" style="top:429.34px;font-size:11px;color:#3a3a3a;left:129.40px;transform:scaleX(0.8327);transform-origin:0 0;">Debra Berger</span><span class="t" style="top:429.34px;font-size:11px;color:#3a3a3a;left:271.40px;transform:scaleX(0.7198);transform-origin:0 0;">US</span><span class="t" style="top:429.34px;font-size:11px;color:#3a3a3a;left:287.40px;transform:scaleX(0.8373);transform-origin:0 0;">United States</span><span class="t" style="top:429.34px;font-size:11px;color:#3a3a3a;left:381.00px;transform:scaleX(0.7288);transform-origin:0 0;">FLOW_FREE</span><span class="t" style="top:429.34px;font-size:11px;color:#3a3a3a;left:484.00px;transform:scaleX(0.8275);transform-origin:0 0;">Active</span><span class="t" style="top:429.34px;font-size:11px;color:#3a3a3a;left:929.38px;transform:scaleX(0.8163);transform-origin:100% 0;">9</span><span class="t" style="top:429.34px;font-size:11px;color:#3a3a3a;left:940.54px;transform:scaleX(0.8290);transform-origin:100% 0;">10,000</span><span class="t" style="top:429.34px;font-size:11px;color:#3a3a3a;left:1006.88px;transform:scaleX(0.8490);transform-origin:100% 0;">0</span><span class="t" style="top:445.48px;font-size:11px;color:#111111;left:87.67px;transform:scaleX(0.8816);transform-origin:100% 0;">2</span><span class="t" style="top:445.48px;font-size:11px;color:#3a3a3a;left:129.40px;transform:scaleX(0.8327);transform-origin:0 0;">Debra Berger</span><span class="t" style="top:445.48px;font-size:11px;color:#3a3a3a;left:271.40px;transform:scaleX(0.7198);transform-origin:0 0;">US</span><span class="t" style="top:445.48px;font-size:11px;color:#3a3a3a;left:287.40px;transform:scaleX(0.8373);transform-origin:0 0;">United States</span><span class="t" style="top:445.48px;font-size:11px;color:#3a3a3a;left:381.00px;transform:scaleX(0.7925);transform-origin:0 0;">Win10_VDA_E3</span><span class="t" style="top:445.48px;font-size:11px;color:#3a3a3a;left:929.38px;transform:scaleX(0.8163);transform-origin:100% 0;">2</span><span class="t" style="top:445.48px;font-size:11px;color:#3a3a3a;left:961.95px;transform:scaleX(0.8163);transform-origin:100% 0;">20</span><span class="t" style="top:445.48px;font-size:11px;color:#3a3a3a;left:1006.88px;transform:scaleX(0.8490);transform-origin:100% 0;">0</span><span class="t" style="top:461.62px;font-size:11px;color:#111111;left:87.67px;transform:scaleX(0.7510);transform-origin:100% 0;">1</span>
</body></html>
